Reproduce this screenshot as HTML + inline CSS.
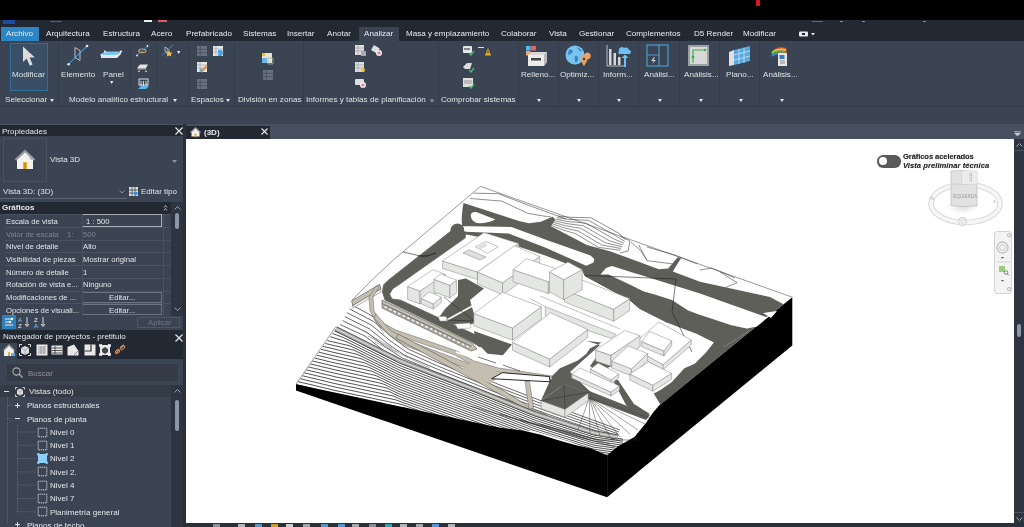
<!DOCTYPE html><html><head><meta charset="utf-8"><style>
*{margin:0;padding:0;box-sizing:border-box}
html,body{width:1024px;height:527px;overflow:hidden;background:#3b4453;font-family:"Liberation Sans",sans-serif}
body>div{position:absolute}
.t{position:absolute;white-space:nowrap;line-height:1;will-change:transform}
svg{position:absolute;overflow:visible}
</style></head><body><div style="left:0px;top:0px;width:1024px;height:20px;background:#000;"></div><div style="left:756px;top:0px;width:4px;height:6px;background:#e0141c;"></div><div style="left:0px;top:20px;width:1024px;height:7px;background:#232932;"></div><div style="left:3px;top:20px;width:12px;height:4px;background:#1e4aa8;"></div><div style="left:50px;top:21px;width:12px;height:1px;background:#5a6270;"></div><div style="left:144px;top:20px;width:8px;height:2px;background:#e8eef4;"></div><div style="left:158px;top:20px;width:9px;height:2px;background:#e05a5a;"></div><div style="left:812px;top:21px;width:11px;height:1px;background:#4a6ab0;"></div><div style="left:840px;top:21px;width:3px;height:1px;background:#8a8f98;"></div><div style="left:862px;top:21px;width:3px;height:1px;background:#8a8f98;"></div><div style="left:923px;top:21px;width:3px;height:1px;background:#8a8f98;"></div><div style="left:0px;top:27px;width:1024px;height:14px;background:#232932;"></div><div style="left:1px;top:27px;width:38px;height:14px;background:#2d86c4;"></div><div style="left:358.5px;top:27px;width:40.5px;height:14px;background:#3b4453;"></div><div class="t" style="left:6px;top:30.2px;font-size:8.1px;color:#e9ecef;">Archivo</div><div class="t" style="left:46.4px;top:30.2px;font-size:8.1px;color:#e9ecef;">Arquitectura</div><div class="t" style="left:103px;top:30.2px;font-size:8.1px;color:#e9ecef;">Estructura</div><div class="t" style="left:151px;top:30.2px;font-size:8.1px;color:#e9ecef;">Acero</div><div class="t" style="left:185.5px;top:30.2px;font-size:8.1px;color:#e9ecef;">Prefabricado</div><div class="t" style="left:243px;top:30.2px;font-size:8.1px;color:#e9ecef;">Sistemas</div><div class="t" style="left:287px;top:30.2px;font-size:8.1px;color:#e9ecef;">Insertar</div><div class="t" style="left:327px;top:30.2px;font-size:8.1px;color:#e9ecef;">Anotar</div><div class="t" style="left:364px;top:30.2px;font-size:8.1px;color:#e9ecef;">Analizar</div><div class="t" style="left:406px;top:30.2px;font-size:8.1px;color:#e9ecef;">Masa y emplazamiento</div><div class="t" style="left:501px;top:30.2px;font-size:8.1px;color:#e9ecef;">Colaborar</div><div class="t" style="left:549px;top:30.2px;font-size:8.1px;color:#e9ecef;">Vista</div><div class="t" style="left:579px;top:30.2px;font-size:8.1px;color:#e9ecef;">Gestionar</div><div class="t" style="left:626px;top:30.2px;font-size:8.1px;color:#e9ecef;">Complementos</div><div class="t" style="left:694px;top:30.2px;font-size:8.1px;color:#e9ecef;">D5 Render</div><div class="t" style="left:743px;top:30.2px;font-size:8.1px;color:#e9ecef;">Modificar</div><svg style="left:799px;top:31px;" width="18" height="6" viewBox="0 0 18 6"><rect x="0" y="0.5" width="9" height="5" rx="1" fill="#e6e9ec"/><rect x="3" y="2" width="3" height="2" fill="#232932"/><path d="M12 2H16L14 4.5Z" fill="#e6e9ec"/></svg><div style="left:0px;top:41px;width:1024px;height:64px;background:#3b4453;"></div><div style="left:0px;top:41px;width:1024px;height:65px;background:#3b4453;"></div><div style="left:0px;top:106px;width:1024px;height:1px;background:#313844;"></div><div style="left:0px;top:107px;width:1024px;height:18px;background:#3b4453;"></div><div style="left:57.5px;top:42px;width:1px;height:63px;background:#343c49;"></div><div style="left:187.5px;top:42px;width:1px;height:63px;background:#343c49;"></div><div style="left:233.5px;top:42px;width:1px;height:63px;background:#343c49;"></div><div style="left:302.5px;top:42px;width:1px;height:63px;background:#343c49;"></div><div style="left:437.5px;top:42px;width:1px;height:63px;background:#343c49;"></div><div style="left:517.5px;top:42px;width:1px;height:63px;background:#343c49;"></div><div style="left:557.5px;top:42px;width:1px;height:63px;background:#343c49;"></div><div style="left:597.5px;top:42px;width:1px;height:63px;background:#343c49;"></div><div style="left:637.5px;top:42px;width:1px;height:63px;background:#343c49;"></div><div style="left:679px;top:42px;width:1px;height:63px;background:#343c49;"></div><div style="left:719px;top:42px;width:1px;height:63px;background:#343c49;"></div><div style="left:759px;top:42px;width:1px;height:63px;background:#343c49;"></div><div style="left:130px;top:43px;width:1px;height:48px;background:#343c49;"></div><div style="left:155.5px;top:43px;width:1px;height:48px;background:#343c49;"></div><div style="left:10px;top:43px;width:38px;height:48px;background:#3a4f66;border:1px solid #2f6f99"></div><svg style="left:22px;top:46px;" width="15" height="21" viewBox="0 0 15 21"><path d="M1 0.5V16L4.6 12.6L7.8 19.8L10.6 18.6L7.6 11.6L12.8 11.4Z" fill="#dcdcdc"/></svg><div class="t" style="left:12.3px;top:70.6px;font-size:8.1px;color:#dfe2e6;">Modificar</div><div class="t" style="left:4.6px;top:95.8px;font-size:8.1px;color:#dfe2e6;">Seleccionar</div><svg style="left:49.8px;top:98.5px;" width="5" height="3" viewBox="0 0 5 3"><path d="M0 0H4L2.0 3Z" fill="#e6e9ec"/></svg><svg style="left:66px;top:44px;" width="24" height="22" viewBox="0 0 24 22"><path d="M2.6 20.2L21 2" stroke="#3b8fd0" stroke-width="1.1"/><path d="M9 3.5L14 6.5V16.5L9 13.5Z" fill="none" stroke="#c8c8c8" stroke-width="0.9"/><circle cx="2.6" cy="20.2" r="1.3" fill="#e8e8e8"/><circle cx="21" cy="2" r="1.3" fill="#e8e8e8"/></svg><div class="t" style="left:60.7px;top:70.6px;font-size:8.1px;color:#dfe2e6;">Elemento</div><svg style="left:100px;top:49px;" width="23" height="12" viewBox="0 0 23 12"><path d="M1 5L5 2.5H21L17 6H1Z" fill="#7cc7f2"/><path d="M1 6H17L21 2.5V5L17 9H1Z" fill="#e6e6e6"/><circle cx="5" cy="2.5" r="1.1" fill="#eee"/><circle cx="21" cy="2.5" r="1.1" fill="#eee"/><circle cx="1.5" cy="6" r="1.1" fill="#eee"/><circle cx="17" cy="6.5" r="1.1" fill="#eee"/></svg><div class="t" style="left:102.6px;top:70.6px;font-size:8.1px;color:#dfe2e6;">Panel</div><svg style="left:110px;top:80.5px;" width="4.4" height="3" viewBox="0 0 4.4 3"><path d="M0 0H3.4L1.7 3Z" fill="#e6e9ec"/></svg><svg style="left:136px;top:45px;" width="13" height="12" viewBox="0 0 13 12"><path d="M1 10.5L11.5 1" stroke="#3b8fd0" stroke-width="1"/><ellipse cx="6.3" cy="5.8" rx="3.6" ry="1.8" fill="none" stroke="#d39a6a" stroke-width="1.2"/><circle cx="1" cy="10.5" r="0.9" fill="#eee"/><circle cx="11.5" cy="1" r="0.9" fill="#eee"/></svg><svg style="left:137px;top:63px;" width="12" height="10" viewBox="0 0 12 10"><path d="M0.5 4.5L3 1.5H11L9 5H0.5Z" fill="#e4e4e4"/><path d="M0.5 5H9V6.5H0.5Z" fill="#aaa"/><path d="M1 9L2 7L3 9ZM8 9L9 7L10 9Z" fill="#ddd"/></svg><svg style="left:137px;top:78px;" width="12" height="12" viewBox="0 0 12 12"><path d="M1 11L4 8H12L9 11Z" fill="#5ab8f0"/><rect x="2" y="1" width="9" height="6" fill="none" stroke="#ddd" stroke-width="1"/><path d="M4 3V8M6.5 3V8M9 3V8" stroke="#ddd"/></svg><svg style="left:161px;top:44px;" width="13" height="13" viewBox="0 0 13 13"><path d="M1 11.5L12 1" stroke="#3b8fd0" stroke-width="1"/><path d="M4 3L7 5V9L4 7Z" fill="none" stroke="#ccc" stroke-width="0.8"/><path d="M8 6L9 8.5L11.5 8.8L9.8 10.3L10.3 12.6L8 11.4L5.8 12.6L6.3 10.3L4.6 8.8L7 8.5Z" fill="#f0c040"/></svg><svg style="left:177px;top:50.5px;" width="4.4" height="3" viewBox="0 0 4.4 3"><path d="M0 0H3.4L1.7 3Z" fill="#e6e9ec"/></svg><div class="t" style="left:68.7px;top:95.8px;font-size:8.1px;color:#dfe2e6;">Modelo analítico estructural</div><svg style="left:173.2px;top:98.5px;" width="5" height="3" viewBox="0 0 5 3"><path d="M0 0H4L2.0 3Z" fill="#e6e9ec"/></svg><svg style="left:197px;top:46px;" width="10" height="10" viewBox="0 0 10 10"><rect x="0" y="0" width="10" height="10" fill="#6a717c"/><path d="M0 3.3H10M0 6.6H10M3.3 0V10" stroke="#3b4453" stroke-width="0.6"/></svg><svg style="left:213px;top:46px;" width="11" height="11" viewBox="0 0 11 11"><rect x="0" y="0" width="10" height="10" fill="#e6e6e6"/><path d="M0 3H10M0 6H10M3 0V10" stroke="#888" stroke-width="0.5"/><rect x="5" y="4" width="4" height="6" fill="#4aa8e8"/><circle cx="9" cy="7" r="1.5" fill="#4aa8e8"/></svg><svg style="left:197px;top:62px;" width="11" height="11" viewBox="0 0 11 11"><rect x="0" y="0" width="10" height="10" fill="#e6e6e6"/><path d="M0 3H10M0 6H10M3 0V10" stroke="#888" stroke-width="0.5"/><path d="M4 10L10 4" stroke="#e8902a" stroke-width="2"/><path d="M3 9L5 7" stroke="#4aa8e8" stroke-width="2"/></svg><svg style="left:197px;top:79px;" width="10" height="10" viewBox="0 0 10 10"><rect x="0" y="0" width="10" height="10" fill="#6a717c"/><path d="M0 3.3H10M0 6.6H10M3.3 0V10" stroke="#3b4453" stroke-width="0.6"/></svg><div class="t" style="left:191px;top:95.8px;font-size:8.1px;color:#dfe2e6;">Espacios</div><svg style="left:226px;top:98.5px;" width="5" height="3" viewBox="0 0 5 3"><path d="M0 0H4L2.0 3Z" fill="#e6e9ec"/></svg><svg style="left:262px;top:53px;" width="12" height="12" viewBox="0 0 12 12"><rect x="0" y="0" width="10" height="10" fill="#e4e4d0"/><rect x="0" y="0" width="3" height="3" fill="#e8c020"/><rect x="0" y="5" width="5" height="5" fill="#6ab4e8"/><path d="M6 5H11V11H6Z" fill="none" stroke="#aaa" stroke-width="0.8"/></svg><svg style="left:263px;top:70px;" width="10" height="10" viewBox="0 0 10 10"><rect x="0" y="0" width="10" height="10" fill="#6a717c"/><path d="M0 3.3H10M0 6.6H10M3.3 0V10" stroke="#3b4453" stroke-width="0.6"/></svg><div class="t" style="left:238px;top:95.8px;font-size:8.1px;color:#dfe2e6;">División en zonas</div><svg style="left:355px;top:45px;" width="11" height="12" viewBox="0 0 11 12"><rect x="0" y="0" width="9" height="10" fill="#dedede"/><path d="M0 3H9M0 6H9M3 0V10" stroke="#888" stroke-width="0.5"/><rect x="6" y="6" width="5" height="5" fill="#aaa"/></svg><svg style="left:371px;top:45px;" width="12" height="12" viewBox="0 0 12 12"><rect x="1" y="1" width="7" height="6" rx="1" fill="#ddd" transform="rotate(30 4 4)"/><circle cx="8" cy="8" r="3" fill="#eee"/><circle cx="8" cy="8" r="1.6" fill="#e87a9a"/></svg><svg style="left:355px;top:62px;" width="11" height="11" viewBox="0 0 11 11"><rect x="0" y="0" width="9" height="10" fill="#dedede"/><path d="M0 3H9M0 6H9M3 0V10" stroke="#888" stroke-width="0.5"/><circle cx="8" cy="8" r="2" fill="#f0c040"/></svg><svg style="left:355px;top:78px;" width="12" height="11" viewBox="0 0 12 11"><rect x="0" y="1" width="9" height="6" rx="1" fill="#dedede"/><circle cx="8" cy="7" r="3" fill="#eee"/><circle cx="8" cy="7" r="1.6" fill="#e87a9a"/></svg><div class="t" style="left:306px;top:95.8px;font-size:8.1px;color:#dfe2e6;">Informes y tablas de planificación</div><div class="t" style="left:430px;top:96.5px;font-size:7px;color:#c8ccd2;">»</div><svg style="left:463px;top:45px;" width="12" height="12" viewBox="0 0 12 12"><rect x="0" y="1" width="9" height="7" rx="1" fill="#e6e6e6"/><rect x="1" y="3" width="6" height="2" fill="#888"/><path d="M6 8L8 10L11 6" stroke="#3cc070" stroke-width="1.4" fill="none"/></svg><svg style="left:478px;top:45px;" width="13" height="12" viewBox="0 0 13 12"><path d="M0 2.5H6" stroke="#ddd" stroke-width="1"/><path d="M7 10.5L10 3L13 10.5Z" fill="#f0b020"/><path d="M10 5.5V8.5" stroke="#333" stroke-width="1"/></svg><svg style="left:463px;top:62px;" width="12" height="11" viewBox="0 0 12 11"><path d="M0 5L4 1H9L7 7H2Z" fill="#ddd"/><path d="M6 8L8 10L11 6" stroke="#3cc070" stroke-width="1.4" fill="none"/></svg><svg style="left:463px;top:78px;" width="12" height="11" viewBox="0 0 12 11"><rect x="0" y="0" width="10" height="9" fill="#e0e0e0"/><path d="M1 3H9M1 5H9" stroke="#777" stroke-width="0.7"/><path d="M6 8L8 10L11 6" stroke="#3cc070" stroke-width="1.4" fill="none"/></svg><div class="t" style="left:440.5px;top:95.8px;font-size:8.1px;color:#dfe2e6;">Comprobar sistemas</div><svg style="left:525px;top:45px;" width="24" height="22" viewBox="0 0 24 22"><rect x="1" y="1" width="4.5" height="4.5" fill="#5ab8f0"/><rect x="6" y="1" width="5" height="4.5" fill="#e86060"/><rect x="1" y="6" width="4.5" height="4.5" fill="#f0a870"/><path d="M3 10L6 7H22V17L19 21H3Z" fill="#d8d8d8"/><path d="M3 10H19V21H3Z" fill="#ececec"/><path d="M19 10L22 7V17L19 21Z" fill="#b8b8b8"/><rect x="6" y="13" width="10" height="2.5" fill="#444"/></svg><div class="t" style="left:520.6px;top:70.6px;font-size:8.1px;color:#dfe2e6;">Relleno...</div><svg style="left:537px;top:99px;" width="5" height="3" viewBox="0 0 5 3"><path d="M0 0H4L2.0 3Z" fill="#e6e9ec"/></svg><svg style="left:565px;top:45px;" width="24" height="22" viewBox="0 0 24 22"><circle cx="10" cy="10" r="9.5" fill="#7cc4f0"/><path d="M4 5C6 4 8 5 8 7C7 9 5 8 4 11C3 9 3 7 4 5ZM10 11C12 10 14 12 13 15C12 17 11 18 10 17C10 15 9 13 10 11ZM12 2C14 3 16 4 17 6C15 7 13 5 12 2Z" fill="#3a88c8"/><path d="M19 11A3.4 3.4 0 1 1 19 11.01ZM15.8 14.5L19 21L22.2 14.5Z" fill="#f0a060"/><path d="M15.6 14C15.6 11.8 17 10.6 19 10.6C21 10.6 22.4 11.8 22.4 14C22.4 16 20 19 19 21C18 19 15.6 16 15.6 14Z" fill="#f0a060"/><circle cx="19" cy="14" r="1.3" fill="#3b4453"/></svg><div class="t" style="left:560px;top:70.6px;font-size:8.1px;color:#dfe2e6;">Optimiz...</div><svg style="left:577px;top:99px;" width="5" height="3" viewBox="0 0 5 3"><path d="M0 0H4L2.0 3Z" fill="#e6e9ec"/></svg><svg style="left:606px;top:44px;" width="24" height="24" viewBox="0 0 24 24"><path d="M1 1V22H20" stroke="#ccc" stroke-width="0.9" fill="none"/><rect x="3" y="5" width="2.5" height="16" fill="#d8d8d8"/><rect x="7.5" y="9" width="2.5" height="12" fill="#d8d8d8"/><rect x="12" y="13" width="2.5" height="8" fill="#d8d8d8"/><path d="M13 7A3 3 0 0 1 18 4A3.5 3.5 0 0 1 23 6A2 2 0 0 1 23 10H13A2 2 0 0 1 13 7Z" fill="#6cc0f4"/><path d="M18 23V14H15.5L19 10.5L22.5 14H20V23Z" fill="#6cc0f4"/></svg><div class="t" style="left:602.5px;top:70.6px;font-size:8.1px;color:#dfe2e6;">Inform...</div><svg style="left:617px;top:99px;" width="5" height="3" viewBox="0 0 5 3"><path d="M0 0H4L2.0 3Z" fill="#e6e9ec"/></svg><svg style="left:646px;top:44px;" width="24" height="24" viewBox="0 0 24 24"><rect x="1" y="1" width="21" height="21" fill="none" stroke="#4a9ad4" stroke-width="1.2"/><path d="M13 1V22M1 11H13" stroke="#4a9ad4" stroke-width="1.2"/><path d="M8 13L5 17H7.5L6 20L10 16H7.5L9 13Z" fill="#c8ccd0"/></svg><div class="t" style="left:643.5px;top:70.6px;font-size:8.1px;color:#dfe2e6;">Análisi...</div><svg style="left:658px;top:99px;" width="5" height="3" viewBox="0 0 5 3"><path d="M0 0H4L2.0 3Z" fill="#e6e9ec"/></svg><svg style="left:687px;top:44px;" width="24" height="24" viewBox="0 0 24 24"><rect x="1" y="1" width="21" height="21" fill="#9aa0a4"/><rect x="3" y="3" width="17" height="17" fill="#d8d8d8"/><path d="M6 19V6H18" stroke="#3cb04a" stroke-width="1.2" fill="none"/><circle cx="6" cy="13" r="1.5" fill="#3cb04a"/><circle cx="18" cy="6" r="1.2" fill="#3cb04a"/></svg><div class="t" style="left:683.5px;top:70.6px;font-size:8.1px;color:#dfe2e6;">Análisis...</div><svg style="left:699px;top:99px;" width="5" height="3" viewBox="0 0 5 3"><path d="M0 0H4L2.0 3Z" fill="#e6e9ec"/></svg><svg style="left:728px;top:45px;" width="24" height="22" viewBox="0 0 24 22"><path d="M1 7L6 5V20L1 21Z" fill="#e0e0e0"/><path d="M6 5L22 1V16L6 20Z" fill="#5aa8e0"/><path d="M6 10L22 6M6 15L22 11M11 4V19M16 3V18" stroke="#cfe6f6" stroke-width="0.8"/></svg><div class="t" style="left:726px;top:70.6px;font-size:8.1px;color:#dfe2e6;">Plano...</div><svg style="left:739px;top:99px;" width="5" height="3" viewBox="0 0 5 3"><path d="M0 0H4L2.0 3Z" fill="#e6e9ec"/></svg><svg style="left:770px;top:44px;" width="22" height="24" viewBox="0 0 22 24"><path d="M2 9C4 3 12 2 16 4L17 9Z" fill="#e83a3a"/><path d="M2 9C5 5 12 5 16 6" stroke="#f0d020" stroke-width="2" fill="none"/><path d="M2 10C5 7 11 7 15 8" stroke="#40c040" stroke-width="2" fill="none"/><path d="M2 12C5 9 10 9 13 10" stroke="#3a8ad8" stroke-width="2" fill="none"/><rect x="8" y="9" width="9" height="13" fill="#e6e6e6"/><rect x="9.5" y="11" width="5" height="4" fill="#3a7ac0"/><path d="M10 17H15M10 19H15" stroke="#777" stroke-width="0.8"/></svg><div class="t" style="left:763px;top:70.6px;font-size:8.1px;color:#dfe2e6;">Análisis...</div><svg style="left:780px;top:99px;" width="5" height="3" viewBox="0 0 5 3"><path d="M0 0H4L2.0 3Z" fill="#e6e9ec"/></svg><div style="left:0px;top:124px;width:183px;height:1px;background:#4a5362;"></div><div style="left:0px;top:125px;width:183px;height:11px;background:#232932;"></div><div class="t" style="left:2.3px;top:127.6px;font-size:8px;color:#e4e7ea;">Propiedades</div><svg style="left:174.5px;top:127px;" width="8" height="8" viewBox="0 0 8 8"><path d="M0.5 0.5L7.5 7.5M7.5 0.5L0.5 7.5" stroke="#e6e8ea" stroke-width="1.2"/></svg><div style="left:0px;top:136px;width:183px;height:193px;background:#3b4453;"></div><div style="left:183px;top:124px;width:3px;height:403px;background:#2a3039;"></div><div style="left:3px;top:138px;width:44px;height:44px;background:#3b4453;border:1px solid #4a5262"></div><svg style="left:14px;top:149px;" width="22" height="22" viewBox="0 0 22 22"><path d="M3 10L11 2L19 10V20H3Z" fill="#f2f2f2"/><path d="M1.5 11L11 2L20.5 11" stroke="#9a9a9a" stroke-width="2.2" fill="none"/><path d="M11 2L20.5 11L17 11Z" fill="#b0b0b0"/><rect x="9" y="13" width="4" height="7" fill="#e8b030"/><rect x="10" y="14" width="2" height="6" fill="#d09020"/></svg><div class="t" style="left:50.2px;top:156.3px;font-size:8px;color:#e4e7ea;">Vista 3D</div><svg style="left:172px;top:159.5px;" width="6" height="3" viewBox="0 0 6 3"><path d="M0 0H5L2.5 3Z" fill="#8a93a0"/></svg><div class="t" style="left:3px;top:187.8px;font-size:8px;color:#dfe2e6;">Vista 3D: (3D)</div><svg style="left:118.5px;top:190px;" width="6" height="4" viewBox="0 0 6 4"><path d="M0.5 0.5L3 3L5.5 0.5" stroke="#8a93a0" fill="none"/></svg><svg style="left:128.7px;top:186.7px;" width="9" height="9" viewBox="0 0 9 9"><rect x="0" y="0" width="9" height="9" fill="#ddd"/><path d="M0 3H9M0 6H9M3 0V9M6 0V9" stroke="#333" stroke-width="0.7"/><rect x="5" y="5" width="3" height="3" fill="#3a8ad8"/></svg><div class="t" style="left:140.8px;top:187.8px;font-size:8px;color:#dfe2e6;">Editar tipo</div><div style="left:0px;top:197.8px;width:127px;height:1.5px;background:#5c6574;"></div><div style="left:0px;top:201.5px;width:171px;height:12px;background:#232932;"></div><div class="t" style="left:2.3px;top:204px;font-size:8px;color:#e8eaec;"><b>Gráficos</b></div><svg style="left:163.8px;top:205px;" width="3" height="6" viewBox="0 0 3 6"><path d="M0 2.5L1.5 0.5L3 2.5M0 5.5L1.5 3.5L3 5.5" stroke="#c8ccd2" stroke-width="0.8" fill="none"/></svg><div style="left:171px;top:201.5px;width:12px;height:115px;background:#2f3540;"></div><svg style="left:174px;top:205.5px;" width="7" height="4" viewBox="0 0 7 4"><path d="M0.5 3.5L3.5 0.5L6.5 3.5" stroke="#9aa2ac" fill="none" stroke-width="1"/></svg><div style="left:174.5px;top:213px;width:4.5px;height:15.5px;background:#8e97a3;border-radius:2px"></div><svg style="left:174px;top:306.5px;" width="7" height="4" viewBox="0 0 7 4"><path d="M0.5 0.5L3.5 3.5L6.5 0.5" stroke="#9aa2ac" fill="none" stroke-width="1"/></svg><div style="left:5px;top:214.3px;width:166px;height:0.8px;background:#4a5261;"></div><div class="t" style="left:6.4px;top:217.9px;font-size:7.7px;color:#e2e5e8;">Escala de vista</div><div style="left:82px;top:214.3px;width:80px;height:12.8px;background:#3b4453;border:1px solid #a8aeb6"></div><div class="t" style="left:85.5px;top:217.9px;font-size:7.7px;color:#e2e5e8;">1 : 500</div><div style="left:5px;top:227.0px;width:166px;height:0.8px;background:#4a5261;"></div><div class="t" style="left:6.4px;top:230.6px;font-size:7.7px;color:#7d8590;">Valor de escala&nbsp;&nbsp;&nbsp;&nbsp;1:</div><div class="t" style="left:83px;top:230.6px;font-size:7.7px;color:#7d8590;">500</div><div style="left:5px;top:239.70000000000002px;width:166px;height:0.8px;background:#4a5261;"></div><div class="t" style="left:6.4px;top:243.3px;font-size:7.7px;color:#e2e5e8;">Nivel de detalle</div><div class="t" style="left:83px;top:243.3px;font-size:7.7px;color:#e2e5e8;">Alto</div><div style="left:5px;top:252.4px;width:166px;height:0.8px;background:#4a5261;"></div><div class="t" style="left:6.4px;top:256.0px;font-size:7.7px;color:#e2e5e8;">Visibilidad de piezas</div><div class="t" style="left:83px;top:256.0px;font-size:7.7px;color:#e2e5e8;">Mostrar original</div><div style="left:5px;top:265.1px;width:166px;height:0.8px;background:#4a5261;"></div><div class="t" style="left:6.4px;top:268.70000000000005px;font-size:7.7px;color:#e2e5e8;">Número de detalle</div><div class="t" style="left:83px;top:268.70000000000005px;font-size:7.7px;color:#e2e5e8;">1</div><div style="left:5px;top:277.8px;width:166px;height:0.8px;background:#4a5261;"></div><div class="t" style="left:6.4px;top:281.40000000000003px;font-size:7.7px;color:#e2e5e8;">Rotación de vista e...</div><div class="t" style="left:83px;top:281.40000000000003px;font-size:7.7px;color:#e2e5e8;">Ninguno</div><div style="left:5px;top:290.5px;width:166px;height:0.8px;background:#4a5261;"></div><div class="t" style="left:6.4px;top:294.1px;font-size:7.7px;color:#e2e5e8;">Modificaciones de ...</div><div style="left:82px;top:291.7px;width:80px;height:11px;background:#3b4453;border:1px solid #6a7382"></div><div class="t" style="left:109px;top:294.1px;font-size:7.7px;color:#e2e5e8;">Editar...</div><div style="left:5px;top:303.2px;width:166px;height:0.8px;background:#4a5261;"></div><div class="t" style="left:6.4px;top:306.8px;font-size:7.7px;color:#e2e5e8;">Opciones de visuali...</div><div style="left:82px;top:304.4px;width:80px;height:11px;background:#3b4453;border:1px solid #6a7382"></div><div class="t" style="left:109px;top:306.8px;font-size:7.7px;color:#e2e5e8;">Editar...</div><div style="left:81.5px;top:214.3px;width:0.8px;height:102px;background:#4a5261;"></div><div style="left:162.5px;top:214.3px;width:0.8px;height:102px;background:#4a5261;"></div><div style="left:0px;top:214px;width:5px;height:102px;background:#3b4453;"></div><div style="left:0px;top:316px;width:183px;height:13px;background:#3b4453;"></div><div style="left:2.4px;top:314.5px;width:13.6px;height:14px;background:#2f7fb8;"></div><svg style="left:4px;top:317px;" width="11" height="9" viewBox="0 0 11 9"><path d="M1 2H8M1 5H6M1 8H9" stroke="#eee" stroke-width="1"/><circle cx="8" cy="2" r="1.3" fill="#eee"/><circle cx="6" cy="5" r="1.3" fill="#eee"/></svg><svg style="left:18px;top:316px;" width="12" height="12" viewBox="0 0 12 12"><text x="0" y="5.5" font-size="6" fill="#8cc8f0" font-family="Liberation Sans">A</text><text x="0" y="11.5" font-size="6" fill="#eee" font-family="Liberation Sans">Z</text><path d="M9 1V10M7 8L9 10.5L11 8" stroke="#eee" fill="none" stroke-width="0.9"/></svg><svg style="left:34px;top:316px;" width="12" height="12" viewBox="0 0 12 12"><text x="0" y="5.5" font-size="6" fill="#eee" font-family="Liberation Sans">Z</text><text x="0" y="11.5" font-size="6" fill="#8cc8f0" font-family="Liberation Sans">A</text><path d="M9 1V10M7 8L9 10.5L11 8" stroke="#eee" fill="none" stroke-width="0.9"/></svg><div style="left:137px;top:316.5px;width:43px;height:11px;background:#3b4453;border:1px solid #4e5766"></div><div class="t" style="left:148px;top:319.3px;font-size:7.7px;color:#6e7682;">Aplicar</div><div style="left:0px;top:329.5px;width:183px;height:13px;background:#232932;"></div><div class="t" style="left:2.8px;top:332.6px;font-size:8px;color:#e4e7ea;">Navegador de proyectos - pretitulo</div><svg style="left:174.5px;top:333.5px;" width="8" height="8" viewBox="0 0 8 8"><path d="M0.5 0.5L7.5 7.5M7.5 0.5L0.5 7.5" stroke="#e6e8ea" stroke-width="1.2"/></svg><div style="left:0px;top:342.5px;width:183px;height:16px;background:#232932;"></div><div style="left:0px;top:342.5px;width:17px;height:16px;background:#3b4453;"></div><svg style="left:3px;top:344px;" width="13" height="13" viewBox="0 0 13 13"><path d="M1 6L6 1L11 6V12H1Z" fill="#f0f0f0"/><path d="M0.5 6.5L6 1L11.5 6.5" stroke="#999" stroke-width="1.4" fill="none"/><rect x="5" y="8" width="2" height="4" fill="#e8b030"/><rect x="8" y="9" width="4" height="3" fill="#5ab0f0"/></svg><svg style="left:19px;top:344px;" width="12" height="12" viewBox="0 0 12 12"><path d="M2 4L6 2L10 4V9L6 11L2 9Z" fill="#ddd"/><path d="M2 4L6 6L10 4M6 6V11" stroke="#888" stroke-width="0.6" fill="none"/><path d="M0.5 3V0.5H3M9 0.5H11.5V3M11.5 9V11.5H9M3 11.5H0.5V9" stroke="#eee" fill="none" stroke-width="0.9"/></svg><svg style="left:36px;top:344px;" width="12" height="12" viewBox="0 0 12 12"><rect x="0.5" y="0.5" width="11" height="11" fill="#e8e8e8"/><path d="M2 3H10M2 5H10M2 7H10M2 9H10M5 2V10M8 2V10" stroke="#666" stroke-width="0.5"/></svg><svg style="left:51px;top:344px;" width="12" height="12" viewBox="0 0 12 12"><rect x="0.5" y="1.5" width="11" height="9" fill="#e8e8e8"/><path d="M1 4H11M1 6.5H11M1 9H11M4 2V10" stroke="#333" stroke-width="0.8"/></svg><svg style="left:67px;top:344px;" width="12" height="12" viewBox="0 0 12 12"><path d="M0.5 3L7 0.5L11.5 7V11.5H0.5Z" fill="#e8e8e8"/><path d="M7 11L11 7" stroke="#777" stroke-width="0.8"/></svg><svg style="left:84px;top:344px;" width="12" height="12" viewBox="0 0 12 12"><rect x="0.5" y="0.5" width="11" height="11" fill="#e8e8e8"/><path d="M7 0.5V7H0.5" stroke="#333" fill="none" stroke-width="1.2"/></svg><svg style="left:99px;top:344px;" width="12" height="12" viewBox="0 0 12 12"><rect x="1" y="1" width="10" height="10" fill="#e8e8e8"/><path d="M0.5 3V0.5H3M9 0.5H11.5V3M11.5 9V11.5H9M3 11.5H0.5V9" stroke="#eee" fill="none" stroke-width="0.9"/><path d="M3 5L6 3L9 5V8L6 10L3 8Z" fill="#444"/></svg><svg style="left:114px;top:344px;" width="12" height="12" viewBox="0 0 12 12"><path d="M2 9L5 6M7 4L10 1" stroke="#d8905a" stroke-width="1.2"/><rect x="1" y="6" width="5" height="3" rx="1.5" transform="rotate(-45 3.5 7.5)" fill="none" stroke="#d8905a" stroke-width="1"/><rect x="6" y="2" width="5" height="3" rx="1.5" transform="rotate(-45 8.5 3.5)" fill="none" stroke="#d8905a" stroke-width="1"/></svg><div style="left:0px;top:358.5px;width:183px;height:169px;background:#3b4453;"></div><div style="left:6.5px;top:363.5px;width:171px;height:17px;background:#343b47;"></div><svg style="left:11.5px;top:367px;" width="11" height="11" viewBox="0 0 11 11"><circle cx="4.5" cy="4.5" r="3.6" stroke="#a8b0ba" stroke-width="1.1" fill="none"/><path d="M7 7L10.5 10.5" stroke="#a8b0ba" stroke-width="1.3"/></svg><div class="t" style="left:28px;top:369.6px;font-size:8px;color:#8a929c;">Buscar</div><div style="left:171px;top:384.5px;width:12px;height:143px;background:#2f3540;"></div><svg style="left:174px;top:389px;" width="7" height="4" viewBox="0 0 7 4"><path d="M0.5 3.5L3.5 0.5L6.5 3.5" stroke="#9aa2ac" fill="none" stroke-width="1"/></svg><div style="left:174.5px;top:399.5px;width:4.5px;height:31px;background:#8e97a3;border-radius:2px"></div><div style="left:0px;top:385.3px;width:171px;height:12px;background:#343b47;"></div><div style="left:4px;top:391px;width:5px;height:1px;background:#dfe2e6;"></div><svg style="left:15px;top:386.5px;" width="10" height="10" viewBox="0 0 10 10"><path d="M2 3L5 1.5L8 3V7L5 8.5L2 7Z" fill="#ddd"/><path d="M2 3L5 4.5L8 3M5 4.5V8.5" stroke="#888" stroke-width="0.5" fill="none"/><path d="M0.5 2.5V0.5H2.5M7.5 0.5H9.5V2.5M9.5 7.5V9.5H7.5M2.5 9.5H0.5V7.5" stroke="#eee" fill="none" stroke-width="0.8"/></svg><div class="t" style="left:29px;top:388.3px;font-size:8px;color:#e4e7ea;">Vistas (todo)</div><svg style="left:0px;top:397px;" width="40" height="128" viewBox="0 0 40 128"><path d="M7.5 0V128M17.5 28V115" stroke="#6a727e" stroke-width="0.8" stroke-dasharray="1 1"/><path d="M7.5 8.3H13" stroke="#6a727e" stroke-width="0.8" stroke-dasharray="1 1"/><path d="M7.5 21.6H13" stroke="#6a727e" stroke-width="0.8" stroke-dasharray="1 1"/><path d="M17.5 35.0H36" stroke="#6a727e" stroke-width="0.8" stroke-dasharray="1 1"/><path d="M17.5 48.3H36" stroke="#6a727e" stroke-width="0.8" stroke-dasharray="1 1"/><path d="M17.5 61.6H36" stroke="#6a727e" stroke-width="0.8" stroke-dasharray="1 1"/><path d="M17.5 74.9H36" stroke="#6a727e" stroke-width="0.8" stroke-dasharray="1 1"/><path d="M17.5 88.2H36" stroke="#6a727e" stroke-width="0.8" stroke-dasharray="1 1"/><path d="M17.5 101.5H36" stroke="#6a727e" stroke-width="0.8" stroke-dasharray="1 1"/><path d="M17.5 114.80000000000001H36" stroke="#6a727e" stroke-width="0.8" stroke-dasharray="1 1"/></svg><div style="left:15px;top:404.8px;width:5px;height:1px;background:#dfe2e6;"></div><div style="left:17px;top:402.8px;width:1px;height:5px;background:#dfe2e6;"></div><div class="t" style="left:26.5px;top:402.4px;font-size:8px;color:#e4e7ea;">Planos estructurales</div><div style="left:15px;top:418px;width:5px;height:1px;background:#dfe2e6;"></div><div class="t" style="left:26.5px;top:415.7px;font-size:8px;color:#e4e7ea;">Planos de planta</div><svg style="left:37px;top:426.5px;" width="11" height="11" viewBox="0 0 11 11"><rect x="1.2" y="1.2" width="8.6" height="8.6" fill="none" stroke="#d8dadc" stroke-width="1" stroke-dasharray="1.2 0.8"/></svg><div class="t" style="left:50.4px;top:428.8px;font-size:8px;color:#e4e7ea;">Nivel 0</div><svg style="left:37px;top:439.8px;" width="11" height="11" viewBox="0 0 11 11"><rect x="1.2" y="1.2" width="8.6" height="8.6" fill="none" stroke="#d8dadc" stroke-width="1" stroke-dasharray="1.2 0.8"/></svg><div class="t" style="left:50.4px;top:442.1px;font-size:8px;color:#e4e7ea;">Nivel 1</div><svg style="left:37px;top:453.1px;" width="11" height="11" viewBox="0 0 11 11"><rect x="1" y="1" width="9" height="9" fill="#8ccff8"/><path d="M0.5 2.5V0.5H2.5M8.5 0.5H10.5V2.5M10.5 8.5V10.5H8.5M2.5 10.5H0.5V8.5" stroke="#ccc" fill="none" stroke-width="0.8"/></svg><div class="t" style="left:50.4px;top:455.40000000000003px;font-size:8px;color:#e4e7ea;">Nivel 2</div><svg style="left:37px;top:466.4px;" width="11" height="11" viewBox="0 0 11 11"><rect x="1.2" y="1.2" width="8.6" height="8.6" fill="none" stroke="#d8dadc" stroke-width="1" stroke-dasharray="1.2 0.8"/></svg><div class="t" style="left:50.4px;top:468.7px;font-size:8px;color:#e4e7ea;">Nivel 2.</div><svg style="left:37px;top:479.7px;" width="11" height="11" viewBox="0 0 11 11"><rect x="1.2" y="1.2" width="8.6" height="8.6" fill="none" stroke="#d8dadc" stroke-width="1" stroke-dasharray="1.2 0.8"/></svg><div class="t" style="left:50.4px;top:482.0px;font-size:8px;color:#e4e7ea;">Nivel 4</div><svg style="left:37px;top:493.0px;" width="11" height="11" viewBox="0 0 11 11"><rect x="1.2" y="1.2" width="8.6" height="8.6" fill="none" stroke="#d8dadc" stroke-width="1" stroke-dasharray="1.2 0.8"/></svg><div class="t" style="left:50.4px;top:495.3px;font-size:8px;color:#e4e7ea;">Nivel 7</div><svg style="left:37px;top:506.3px;" width="11" height="11" viewBox="0 0 11 11"><rect x="1.2" y="1.2" width="8.6" height="8.6" fill="none" stroke="#d8dadc" stroke-width="1" stroke-dasharray="1.2 0.8"/></svg><div class="t" style="left:50.4px;top:508.6px;font-size:8px;color:#e4e7ea;">Planimetría general</div><div style="left:15px;top:524px;width:5px;height:1px;background:#dfe2e6;"></div><div style="left:17px;top:522px;width:1px;height:5px;background:#dfe2e6;"></div><div class="t" style="left:26.5px;top:521.7px;font-size:8px;color:#e4e7ea;">Planos de techo</div><div style="left:186px;top:124px;width:838px;height:15px;background:#475061;"></div><div style="left:186px;top:125.5px;width:84px;height:13.5px;background:#232932;"></div><svg style="left:189.5px;top:126.5px;" width="11" height="10" viewBox="0 0 11 10"><path d="M1.5 5L5.5 1L9.5 5V9.5H1.5Z" fill="#f0f0f0"/><path d="M0.5 5.5L5.5 0.8L10.5 5.5" stroke="#999" stroke-width="1.3" fill="none"/><rect x="4.5" y="6.5" width="2" height="3" fill="#e8b030"/></svg><div class="t" style="left:203.8px;top:128.6px;font-size:8px;color:#e8eaec;"><b>(3D)</b></div><svg style="left:261px;top:128px;" width="7" height="7" viewBox="0 0 7 7"><path d="M0.5 0.5L6.5 6.5M6.5 0.5L0.5 6.5" stroke="#e6e8ea" stroke-width="1.1"/></svg><svg style="left:1014px;top:131px;" width="7" height="6" viewBox="0 0 7 6"><path d="M0 0.5H7M0.5 2L3.5 5L6.5 2Z" stroke="#c8ccd2" fill="#c8ccd2" stroke-width="0.6"/></svg><div style="left:186px;top:139px;width:827.5px;height:384px;background:#ffffff;"></div><div style="left:1013.5px;top:139px;width:10.5px;height:384px;background:#2f3540;"></div><div style="left:1013.5px;top:150px;width:10.5px;height:0.8px;background:#4a5362;"></div><svg style="left:1016px;top:143px;" width="7" height="4" viewBox="0 0 7 4"><path d="M0.5 3.5L3.5 0.5L6.5 3.5" stroke="#9aa2ac" fill="none" stroke-width="1"/></svg><div style="left:1016.5px;top:324px;width:4.5px;height:13px;background:#8e97a3;border-radius:2px"></div><div style="left:1013.5px;top:512px;width:10.5px;height:0.8px;background:#4a5362;"></div><svg style="left:1016px;top:516.5px;" width="7" height="4" viewBox="0 0 7 4"><path d="M0.5 0.5L3.5 3.5L6.5 0.5" stroke="#9aa2ac" fill="none" stroke-width="1"/></svg><div style="left:183px;top:523px;width:841px;height:4px;background:#2a3039;"></div><svg style="left:0;top:0" width="1024" height="527" viewBox="0 0 1024 527"><defs><clipPath id="vp"><rect x="186" y="139" width="827.5" height="384"/></clipPath></defs><g clip-path="url(#vp)"><clipPath id="slp"><polygon points="296,384.3 335.9,328.8 400.3,361 476.5,390.3 535.1,413.8 593.7,432.8 623,437.2 623,449 607,455 564.4,440.1 535,431.3 494,428.4 400,408 330,394.7 296,384.8"/></clipPath><g clip-path="url(#slp)"><path d="M270.0 302.9L273.0 304.2L276.0 305.5L279.0 306.8L282.0 308.1L285.0 309.4L288.0 310.7L291.0 312.0L294.0 313.3L297.0 314.6L300.0 315.9L303.0 317.2L306.0 318.5L309.0 319.8L312.0 321.1L315.0 322.4L318.0 323.8L321.0 325.1L324.0 326.4L327.0 327.7L330.0 329.0L333.0 330.3L336.0 331.6L339.0 332.9L342.0 334.3L345.0 335.8L348.0 337.3L351.0 338.8L354.0 340.3L357.0 341.8L360.0 343.3L363.0 344.8L366.0 346.3L369.0 347.8L372.0 349.3L375.0 350.8L378.0 352.3L381.0 353.8L384.0 355.3L387.0 356.8L390.0 358.3L393.0 359.8L396.0 361.2L399.0 362.7L402.0 364.0L405.0 365.2L408.0 366.3L411.0 367.5L414.0 368.6L417.0 369.8L420.0 370.9L423.0 372.1L426.0 373.2L429.0 374.4L432.0 375.5L435.0 376.7L438.0 377.8L441.0 379.0L444.0 380.1L447.0 381.3L450.0 382.4L453.0 383.6L456.0 384.7L459.0 385.9L462.0 387.0L465.0 388.2L468.0 389.3L471.0 390.4L474.0 391.6L477.0 392.8L480.0 394.0L483.0 395.2L486.0 396.3L489.0 397.5L492.0 398.7L495.0 399.9L498.0 401.1L501.0 402.3L504.0 403.5L507.0 404.7L510.0 405.9L513.0 407.1L516.0 408.3L519.0 409.5L522.0 410.7L525.0 411.9L528.0 413.1L531.0 414.3L534.0 415.5L537.0 416.6L540.0 417.5L543.0 418.5L546.0 419.5L549.0 420.4L552.0 421.4L555.0 422.4L558.0 423.3L561.0 424.3L564.0 425.3L567.0 426.2L570.0 427.2L573.0 428.2L576.0 429.1L579.0 430.1L582.0 431.1L585.0 432.0L588.0 433.0L591.0 434.0L594.0 434.9L597.0 435.3L600.0 435.8L603.0 436.2L606.0 436.7L609.0 437.1L612.0 437.6L615.0 438.0L618.0 438.5L621.0 438.9L624.0 439.4L627.0 439.8L630.0 440.3L633.0 440.7L636.0 441.2L639.0 441.6M270.0 310.4L273.0 311.5L276.0 312.6L279.0 313.7L282.0 314.8L285.0 315.9L288.0 317.0L291.0 318.1L294.0 319.2L297.0 320.4L300.0 321.5L303.0 322.6L306.0 323.7L309.0 324.8L312.0 325.9L315.0 327.0L318.0 328.1L321.0 329.2L324.0 330.3L327.0 331.5L330.0 332.6L333.0 333.7L336.0 334.8L339.0 335.9L342.0 337.0L345.0 338.3L348.0 339.8L351.0 341.3L354.0 342.8L357.0 344.3L360.0 345.8L363.0 347.3L366.0 348.7L369.0 350.2L372.0 351.7L375.0 353.2L378.0 354.7L381.0 356.2L384.0 357.7L387.0 359.2L390.0 360.7L393.0 362.2L396.0 363.6L399.0 365.1L402.0 366.4L405.0 367.6L408.0 368.7L411.0 369.9L414.0 371.0L417.0 372.1L420.0 373.3L423.0 374.4L426.0 375.6L429.0 376.7L432.0 377.9L435.0 379.0L438.0 380.1L441.0 381.3L444.0 382.4L447.0 383.6L450.0 384.7L453.0 385.9L456.0 387.0L459.0 388.1L462.0 389.3L465.0 390.4L468.0 391.6L471.0 392.7L474.0 393.9L477.0 395.0L480.0 396.2L483.0 397.4L486.0 398.6L489.0 399.8L492.0 401.0L495.0 402.2L498.0 403.4L501.0 404.6L504.0 405.7L507.0 406.9L510.0 408.1L513.0 409.3L516.0 410.5L519.0 411.7L522.0 412.9L525.0 414.1L528.0 415.3L531.0 416.5L534.0 417.7L537.0 418.7L540.0 419.7L543.0 420.6L546.0 421.6L549.0 422.6L552.0 423.5L555.0 424.5L558.0 425.5L561.0 426.4L564.0 427.4L567.0 428.3L570.0 429.3L573.0 430.3L576.0 431.2L579.0 432.2L582.0 433.1L585.0 434.1L588.0 435.1L591.0 436.0L594.0 436.9L597.0 437.4L600.0 437.8L603.0 438.3L606.0 438.7L609.0 439.1L612.0 439.6L615.0 440.0L618.0 440.5L621.0 440.9L624.0 441.4L627.0 441.8L630.0 442.3L633.0 442.7L636.0 443.2L639.0 443.6M270.0 318.3L273.0 319.2L276.0 320.2L279.0 321.1L282.0 322.0L285.0 322.9L288.0 323.8L291.0 324.7L294.0 325.6L297.0 326.6L300.0 327.5L303.0 328.4L306.0 329.3L309.0 330.2L312.0 331.1L315.0 332.1L318.0 333.0L321.0 333.9L324.0 334.8L327.0 335.7L330.0 336.6L333.0 337.5L336.0 338.5L339.0 339.4L342.0 340.3L345.0 341.2L348.0 342.3L351.0 343.8L354.0 345.3L357.0 346.7L360.0 348.2L363.0 349.7L366.0 351.2L369.0 352.7L372.0 354.2L375.0 355.6L378.0 357.1L381.0 358.6L384.0 360.1L387.0 361.6L390.0 363.1L393.0 364.6L396.0 366.0L399.0 367.5L402.0 368.8L405.0 369.9L408.0 371.1L411.0 372.2L414.0 373.4L417.0 374.5L420.0 375.6L423.0 376.8L426.0 377.9L429.0 379.0L432.0 380.2L435.0 381.3L438.0 382.5L441.0 383.6L444.0 384.7L447.0 385.9L450.0 387.0L453.0 388.2L456.0 389.3L459.0 390.4L462.0 391.6L465.0 392.7L468.0 393.8L471.0 395.0L474.0 396.1L477.0 397.3L480.0 398.5L483.0 399.6L486.0 400.8L489.0 402.0L492.0 403.2L495.0 404.4L498.0 405.6L501.0 406.8L504.0 408.0L507.0 409.1L510.0 410.3L513.0 411.5L516.0 412.7L519.0 413.9L522.0 415.1L525.0 416.3L528.0 417.4L531.0 418.6L534.0 419.8L537.0 420.9L540.0 421.8L543.0 422.8L546.0 423.7L549.0 424.7L552.0 425.7L555.0 426.6L558.0 427.6L561.0 428.5L564.0 429.5L567.0 430.4L570.0 431.4L573.0 432.3L576.0 433.3L579.0 434.3L582.0 435.2L585.0 436.2L588.0 437.1L591.0 438.1L594.0 439.0L597.0 439.4L600.0 439.9L603.0 440.3L606.0 440.7L609.0 441.2L612.0 441.6L615.0 442.0L618.0 442.5L621.0 442.9L624.0 443.4L627.0 443.8L630.0 444.3L633.0 444.7L636.0 445.2L639.0 445.6M270.0 326.8L273.0 327.5L276.0 328.2L279.0 328.9L282.0 329.6L285.0 330.4L288.0 331.1L291.0 331.8L294.0 332.5L297.0 333.2L300.0 334.0L303.0 334.7L306.0 335.4L309.0 336.1L312.0 336.8L315.0 337.6L318.0 338.3L321.0 339.0L324.0 339.7L327.0 340.4L330.0 341.2L333.0 341.9L336.0 342.6L339.0 343.3L342.0 344.0L345.0 344.7L348.0 345.4L351.0 346.2L354.0 347.7L357.0 349.2L360.0 350.7L363.0 352.2L366.0 353.6L369.0 355.1L372.0 356.6L375.0 358.1L378.0 359.6L381.0 361.0L384.0 362.5L387.0 364.0L390.0 365.5L393.0 367.0L396.0 368.4L399.0 369.9L402.0 371.2L405.0 372.3L408.0 373.5L411.0 374.6L414.0 375.7L417.0 376.9L420.0 378.0L423.0 379.1L426.0 380.3L429.0 381.4L432.0 382.5L435.0 383.7L438.0 384.8L441.0 385.9L444.0 387.1L447.0 388.2L450.0 389.3L453.0 390.4L456.0 391.6L459.0 392.7L462.0 393.8L465.0 395.0L468.0 396.1L471.0 397.2L474.0 398.4L477.0 399.5L480.0 400.7L483.0 401.9L486.0 403.1L489.0 404.2L492.0 405.4L495.0 406.6L498.0 407.8L501.0 409.0L504.0 410.2L507.0 411.3L510.0 412.5L513.0 413.7L516.0 414.9L519.0 416.1L522.0 417.3L525.0 418.4L528.0 419.6L531.0 420.8L534.0 422.0L537.0 423.0L540.0 424.0L543.0 424.9L546.0 425.9L549.0 426.8L552.0 427.8L555.0 428.7L558.0 429.7L561.0 430.6L564.0 431.6L567.0 432.5L570.0 433.5L573.0 434.4L576.0 435.4L579.0 436.3L582.0 437.3L585.0 438.2L588.0 439.2L591.0 440.1L594.0 441.0L597.0 441.5L600.0 441.9L603.0 442.3L606.0 442.8L609.0 443.2L612.0 443.6L615.0 444.1L618.0 444.5L621.0 444.9L624.0 445.4L627.0 445.8L630.0 446.3L633.0 446.7L636.0 447.2L639.0 447.6M270.0 330.2L273.0 330.9L276.0 331.6L279.0 332.4L282.0 333.1L285.0 333.8L288.0 334.5L291.0 335.2L294.0 336.0L297.0 336.7L300.0 337.4L303.0 338.1L306.0 338.8L309.0 339.6L312.0 340.3L315.0 341.0L318.0 341.7L321.0 342.4L324.0 343.2L327.0 343.9L330.0 344.6L333.0 345.3L336.0 346.0L339.0 346.7L342.0 347.4L345.0 348.1L348.0 348.8L351.0 349.5L354.0 350.2L357.0 351.7L360.0 353.1L363.0 354.6L366.0 356.1L369.0 357.6L372.0 359.0L375.0 360.5L378.0 362.0L381.0 363.5L384.0 364.9L387.0 366.4L390.0 367.9L393.0 369.4L396.0 370.8L399.0 372.3L402.0 373.6L405.0 374.7L408.0 375.8L411.0 377.0L414.0 378.1L417.0 379.2L420.0 380.3L423.0 381.5L426.0 382.6L429.0 383.7L432.0 384.9L435.0 386.0L438.0 387.1L441.0 388.2L444.0 389.4L447.0 390.5L450.0 391.6L453.0 392.7L456.0 393.9L459.0 395.0L462.0 396.1L465.0 397.3L468.0 398.4L471.0 399.5L474.0 400.6L477.0 401.8L480.0 402.9L483.0 404.1L486.0 405.3L489.0 406.5L492.0 407.7L495.0 408.8L498.0 410.0L501.0 411.2L504.0 412.4L507.0 413.5L510.0 414.7L513.0 415.9L516.0 417.1L519.0 418.2L522.0 419.4L525.0 420.6L528.0 421.8L531.0 423.0L534.0 424.1L537.0 425.2L540.0 426.1L543.0 427.1L546.0 428.0L549.0 429.0L552.0 429.9L555.0 430.8L558.0 431.8L561.0 432.7L564.0 433.7L567.0 434.6L570.0 435.6L573.0 436.5L576.0 437.5L579.0 438.4L582.0 439.4L585.0 440.3L588.0 441.3L591.0 442.2L594.0 443.1L597.0 443.5L600.0 443.9L603.0 444.4L606.0 444.8L609.0 445.2L612.0 445.6L615.0 446.1L618.0 446.5L621.0 446.9L624.0 447.4L627.0 447.8L630.0 448.3L633.0 448.7L636.0 449.2L639.0 449.6M270.0 333.6L273.0 334.3L276.0 335.1L279.0 335.8L282.0 336.5L285.0 337.2L288.0 337.9L291.0 338.7L294.0 339.4L297.0 340.1L300.0 340.8L303.0 341.5L306.0 342.3L309.0 343.0L312.0 343.7L315.0 344.4L318.0 345.1L321.0 345.9L324.0 346.6L327.0 347.3L330.0 348.0L333.0 348.7L336.0 349.5L339.0 350.2L342.0 350.8L345.0 351.5L348.0 352.2L351.0 352.9L354.0 353.6L357.0 354.3L360.0 355.6L363.0 357.1L366.0 358.5L369.0 360.0L372.0 361.5L375.0 362.9L378.0 364.4L381.0 365.9L384.0 367.3L387.0 368.8L390.0 370.3L393.0 371.8L396.0 373.2L399.0 374.7L402.0 376.0L405.0 377.1L408.0 378.2L411.0 379.3L414.0 380.5L417.0 381.6L420.0 382.7L423.0 383.8L426.0 384.9L429.0 386.1L432.0 387.2L435.0 388.3L438.0 389.4L441.0 390.6L444.0 391.7L447.0 392.8L450.0 393.9L453.0 395.0L456.0 396.2L459.0 397.3L462.0 398.4L465.0 399.5L468.0 400.7L471.0 401.8L474.0 402.9L477.0 404.0L480.0 405.2L483.0 406.4L486.0 407.5L489.0 408.7L492.0 409.9L495.0 411.1L498.0 412.2L501.0 413.4L504.0 414.6L507.0 415.7L510.0 416.9L513.0 418.1L516.0 419.3L519.0 420.4L522.0 421.6L525.0 422.8L528.0 423.9L531.0 425.1L534.0 426.3L537.0 427.3L540.0 428.3L543.0 429.2L546.0 430.1L549.0 431.1L552.0 432.0L555.0 433.0L558.0 433.9L561.0 434.8L564.0 435.8L567.0 436.7L570.0 437.7L573.0 438.6L576.0 439.6L579.0 440.5L582.0 441.4L585.0 442.4L588.0 443.3L591.0 444.3L594.0 445.1L597.0 445.6L600.0 446.0L603.0 446.4L606.0 446.8L609.0 447.2L612.0 447.7L615.0 448.1L618.0 448.5L621.0 448.9L624.0 449.4L627.0 449.8L630.0 450.3L633.0 450.7L636.0 451.2L639.0 451.6M270.0 337.1L273.0 337.8L276.0 338.5L279.0 339.2L282.0 339.9L285.0 340.7L288.0 341.4L291.0 342.1L294.0 342.8L297.0 343.5L300.0 344.3L303.0 345.0L306.0 345.7L309.0 346.4L312.0 347.1L315.0 347.9L318.0 348.6L321.0 349.3L324.0 350.0L327.0 350.7L330.0 351.5L333.0 352.2L336.0 352.9L339.0 353.6L342.0 354.3L345.0 355.0L348.0 355.6L351.0 356.3L354.0 357.0L357.0 357.7L360.0 358.4L363.0 359.5L366.0 361.0L369.0 362.4L372.0 363.9L375.0 365.4L378.0 366.8L381.0 368.3L384.0 369.8L387.0 371.2L390.0 372.7L393.0 374.2L396.0 375.6L399.0 377.1L402.0 378.3L405.0 379.5L408.0 380.6L411.0 381.7L414.0 382.8L417.0 383.9L420.0 385.1L423.0 386.2L426.0 387.3L429.0 388.4L432.0 389.5L435.0 390.6L438.0 391.8L441.0 392.9L444.0 394.0L447.0 395.1L450.0 396.2L453.0 397.3L456.0 398.5L459.0 399.6L462.0 400.7L465.0 401.8L468.0 402.9L471.0 404.0L474.0 405.2L477.0 406.3L480.0 407.4L483.0 408.6L486.0 409.8L489.0 410.9L492.0 412.1L495.0 413.3L498.0 414.4L501.0 415.6L504.0 416.8L507.0 417.9L510.0 419.1L513.0 420.3L516.0 421.4L519.0 422.6L522.0 423.8L525.0 424.9L528.0 426.1L531.0 427.3L534.0 428.4L537.0 429.5L540.0 430.4L543.0 431.3L546.0 432.3L549.0 433.2L552.0 434.1L555.0 435.1L558.0 436.0L561.0 437.0L564.0 437.9L567.0 438.8L570.0 439.8L573.0 440.7L576.0 441.6L579.0 442.6L582.0 443.5L585.0 444.4L588.0 445.4L591.0 446.3L594.0 447.2L597.0 447.6L600.0 448.0L603.0 448.4L606.0 448.9L609.0 449.3L612.0 449.7L615.0 450.1L618.0 450.5L621.0 450.9L624.0 451.4L627.0 451.8L630.0 452.3L633.0 452.7L636.0 453.2L639.0 453.6M270.0 340.5L273.0 341.2L276.0 341.9L279.0 342.7L282.0 343.4L285.0 344.1L288.0 344.8L291.0 345.5L294.0 346.3L297.0 347.0L300.0 347.7L303.0 348.4L306.0 349.1L309.0 349.9L312.0 350.6L315.0 351.3L318.0 352.0L321.0 352.7L324.0 353.5L327.0 354.2L330.0 354.9L333.0 355.6L336.0 356.3L339.0 357.0L342.0 357.7L345.0 358.4L348.0 359.1L351.0 359.7L354.0 360.4L357.0 361.1L360.0 361.8L363.0 362.4L366.0 363.4L369.0 364.9L372.0 366.3L375.0 367.8L378.0 369.3L381.0 370.7L384.0 372.2L387.0 373.6L390.0 375.1L393.0 376.6L396.0 378.0L399.0 379.5L402.0 380.7L405.0 381.8L408.0 383.0L411.0 384.1L414.0 385.2L417.0 386.3L420.0 387.4L423.0 388.5L426.0 389.6L429.0 390.7L432.0 391.9L435.0 393.0L438.0 394.1L441.0 395.2L444.0 396.3L447.0 397.4L450.0 398.5L453.0 399.6L456.0 400.7L459.0 401.9L462.0 403.0L465.0 404.1L468.0 405.2L471.0 406.3L474.0 407.4L477.0 408.5L480.0 409.7L483.0 410.9L486.0 412.0L489.0 413.2L492.0 414.3L495.0 415.5L498.0 416.7L501.0 417.8L504.0 419.0L507.0 420.1L510.0 421.3L513.0 422.5L516.0 423.6L519.0 424.8L522.0 426.0L525.0 427.1L528.0 428.3L531.0 429.4L534.0 430.6L537.0 431.6L540.0 432.5L543.0 433.5L546.0 434.4L549.0 435.3L552.0 436.3L555.0 437.2L558.0 438.1L561.0 439.1L564.0 440.0L567.0 440.9L570.0 441.9L573.0 442.8L576.0 443.7L579.0 444.6L582.0 445.6L585.0 446.5L588.0 447.4L591.0 448.4L594.0 449.2L597.0 449.7L600.0 450.1L603.0 450.5L606.0 450.9L609.0 451.3L612.0 451.7L615.0 452.1L618.0 452.5L621.0 452.9L624.0 453.4L627.0 453.8L630.0 454.3L633.0 454.7L636.0 455.2L639.0 455.6M270.0 343.9L273.0 344.7L276.0 345.4L279.0 346.1L282.0 346.8L285.0 347.5L288.0 348.3L291.0 349.0L294.0 349.7L297.0 350.4L300.0 351.1L303.0 351.9L306.0 352.6L309.0 353.3L312.0 354.0L315.0 354.7L318.0 355.5L321.0 356.2L324.0 356.9L327.0 357.6L330.0 358.3L333.0 359.1L336.0 359.8L339.0 360.4L342.0 361.1L345.0 361.8L348.0 362.5L351.0 363.1L354.0 363.8L357.0 364.5L360.0 365.2L363.0 365.8L366.0 366.5L369.0 367.3L372.0 368.8L375.0 370.2L378.0 371.7L381.0 373.1L384.0 374.6L387.0 376.1L390.0 377.5L393.0 379.0L396.0 380.4L399.0 381.9L402.0 383.1L405.0 384.2L408.0 385.3L411.0 386.4L414.0 387.5L417.0 388.7L420.0 389.8L423.0 390.9L426.0 392.0L429.0 393.1L432.0 394.2L435.0 395.3L438.0 396.4L441.0 397.5L444.0 398.6L447.0 399.7L450.0 400.8L453.0 401.9L456.0 403.0L459.0 404.1L462.0 405.2L465.0 406.4L468.0 407.5L471.0 408.6L474.0 409.7L477.0 410.8L480.0 411.9L483.0 413.1L486.0 414.3L489.0 415.4L492.0 416.6L495.0 417.7L498.0 418.9L501.0 420.0L504.0 421.2L507.0 422.4L510.0 423.5L513.0 424.7L516.0 425.8L519.0 427.0L522.0 428.1L525.0 429.3L528.0 430.4L531.0 431.6L534.0 432.8L537.0 433.8L540.0 434.7L543.0 435.6L546.0 436.5L549.0 437.5L552.0 438.4L555.0 439.3L558.0 440.2L561.0 441.2L564.0 442.1L567.0 443.0L570.0 443.9L573.0 444.9L576.0 445.8L579.0 446.7L582.0 447.6L585.0 448.6L588.0 449.5L591.0 450.4L594.0 451.3L597.0 451.7L600.0 452.1L603.0 452.5L606.0 452.9L609.0 453.3L612.0 453.7L615.0 454.1L618.0 454.5L621.0 454.9L624.0 455.4L627.0 455.8L630.0 456.3L633.0 456.7L636.0 457.2L639.0 457.6M270.0 347.4L273.0 348.1L276.0 348.8L279.0 349.5L282.0 350.2L285.0 351.0L288.0 351.7L291.0 352.4L294.0 353.1L297.0 353.9L300.0 354.6L303.0 355.3L306.0 356.0L309.0 356.7L312.0 357.5L315.0 358.2L318.0 358.9L321.0 359.6L324.0 360.3L327.0 361.1L330.0 361.8L333.0 362.5L336.0 363.2L339.0 363.9L342.0 364.5L345.0 365.2L348.0 365.9L351.0 366.5L354.0 367.2L357.0 367.9L360.0 368.6L363.0 369.2L366.0 369.9L369.0 370.6L372.0 371.2L375.0 372.7L378.0 374.1L381.0 375.6L384.0 377.0L387.0 378.5L390.0 379.9L393.0 381.4L396.0 382.8L399.0 384.3L402.0 385.5L405.0 386.6L408.0 387.7L411.0 388.8L414.0 389.9L417.0 391.0L420.0 392.1L423.0 393.2L426.0 394.3L429.0 395.4L432.0 396.5L435.0 397.6L438.0 398.7L441.0 399.8L444.0 400.9L447.0 402.0L450.0 403.1L453.0 404.2L456.0 405.3L459.0 406.4L462.0 407.5L465.0 408.6L468.0 409.7L471.0 410.8L474.0 411.9L477.0 413.0L480.0 414.2L483.0 415.3L486.0 416.5L489.0 417.6L492.0 418.8L495.0 419.9L498.0 421.1L501.0 422.3L504.0 423.4L507.0 424.6L510.0 425.7L513.0 426.9L516.0 428.0L519.0 429.2L522.0 430.3L525.0 431.5L528.0 432.6L531.0 433.8L534.0 434.9L537.0 435.9L540.0 436.8L543.0 437.8L546.0 438.7L549.0 439.6L552.0 440.5L555.0 441.4L558.0 442.4L561.0 443.3L564.0 444.2L567.0 445.1L570.0 446.0L573.0 447.0L576.0 447.9L579.0 448.8L582.0 449.7L585.0 450.6L588.0 451.6L591.0 452.5L594.0 453.4L597.0 453.7L600.0 454.1L603.0 454.5L606.0 454.9L609.0 455.3L612.0 455.7L615.0 456.1L618.0 456.5L621.0 456.9L624.0 457.4L627.0 457.8L630.0 458.3L633.0 458.7L636.0 459.2L639.0 459.6M270.0 350.8L273.0 351.5L276.0 352.2L279.0 353.0L282.0 353.7L285.0 354.4L288.0 355.1L291.0 355.8L294.0 356.6L297.0 357.3L300.0 358.0L303.0 358.7L306.0 359.4L309.0 360.2L312.0 360.9L315.0 361.6L318.0 362.3L321.0 363.0L324.0 363.8L327.0 364.5L330.0 365.2L333.0 365.9L336.0 366.6L339.0 367.3L342.0 368.0L345.0 368.6L348.0 369.3L351.0 370.0L354.0 370.6L357.0 371.3L360.0 371.9L363.0 372.6L366.0 373.3L369.0 373.9L372.0 374.6L375.0 375.3L378.0 376.5L381.0 378.0L384.0 379.4L387.0 380.9L390.0 382.3L393.0 383.8L396.0 385.2L399.0 386.6L402.0 387.9L405.0 389.0L408.0 390.1L411.0 391.2L414.0 392.3L417.0 393.4L420.0 394.5L423.0 395.6L426.0 396.7L429.0 397.8L432.0 398.8L435.0 399.9L438.0 401.0L441.0 402.1L444.0 403.2L447.0 404.3L450.0 405.4L453.0 406.5L456.0 407.6L459.0 408.7L462.0 409.8L465.0 410.9L468.0 412.0L471.0 413.1L474.0 414.2L477.0 415.3L480.0 416.4L483.0 417.6L486.0 418.7L489.0 419.9L492.0 421.0L495.0 422.2L498.0 423.3L501.0 424.5L504.0 425.6L507.0 426.8L510.0 427.9L513.0 429.0L516.0 430.2L519.0 431.3L522.0 432.5L525.0 433.6L528.0 434.8L531.0 435.9L534.0 437.1L537.0 438.1L540.0 439.0L543.0 439.9L546.0 440.8L549.0 441.7L552.0 442.6L555.0 443.6L558.0 444.5L561.0 445.4L564.0 446.3L567.0 447.2L570.0 448.1L573.0 449.0L576.0 450.0L579.0 450.9L582.0 451.8L585.0 452.7L588.0 453.6L591.0 454.5L594.0 455.4L597.0 455.8L600.0 456.2L603.0 456.6L606.0 457.0L609.0 457.4L612.0 457.8L615.0 458.2L618.0 458.5L621.0 458.9L624.0 459.4L627.0 459.8L630.0 460.3L633.0 460.7L636.0 461.2L639.0 461.6M270.0 354.2L273.0 355.0L276.0 355.7L279.0 356.4L282.0 357.1L285.0 357.8L288.0 358.6L291.0 359.3L294.0 360.0L297.0 360.7L300.0 361.4L303.0 362.2L306.0 362.9L309.0 363.6L312.0 364.3L315.0 365.0L318.0 365.8L321.0 366.5L324.0 367.2L327.0 367.9L330.0 368.6L333.0 369.4L336.0 370.1L339.0 370.7L342.0 371.4L345.0 372.1L348.0 372.7L351.0 373.4L354.0 374.0L357.0 374.7L360.0 375.3L363.0 376.0L366.0 376.7L369.0 377.3L372.0 378.0L375.0 378.6L378.0 379.3L381.0 380.4L384.0 381.8L387.0 383.3L390.0 384.7L393.0 386.2L396.0 387.6L399.0 389.0L402.0 390.3L405.0 391.4L408.0 392.5L411.0 393.5L414.0 394.6L417.0 395.7L420.0 396.8L423.0 397.9L426.0 399.0L429.0 400.1L432.0 401.2L435.0 402.3L438.0 403.4L441.0 404.5L444.0 405.5L447.0 406.6L450.0 407.7L453.0 408.8L456.0 409.9L459.0 411.0L462.0 412.1L465.0 413.2L468.0 414.3L471.0 415.4L474.0 416.5L477.0 417.6L480.0 418.7L483.0 419.8L486.0 421.0L489.0 422.1L492.0 423.3L495.0 424.4L498.0 425.5L501.0 426.7L504.0 427.8L507.0 429.0L510.0 430.1L513.0 431.2L516.0 432.4L519.0 433.5L522.0 434.7L525.0 435.8L528.0 436.9L531.0 438.1L534.0 439.2L537.0 440.2L540.0 441.1L543.0 442.0L546.0 442.9L549.0 443.9L552.0 444.8L555.0 445.7L558.0 446.6L561.0 447.5L564.0 448.4L567.0 449.3L570.0 450.2L573.0 451.1L576.0 452.0L579.0 453.0L582.0 453.9L585.0 454.8L588.0 455.7L591.0 456.6L594.0 457.5L597.0 457.8L600.0 458.2L603.0 458.6L606.0 459.0L609.0 459.4L612.0 459.8L615.0 460.2L618.0 460.6L621.0 460.9L624.0 461.4L627.0 461.8L630.0 462.3L633.0 462.7L636.0 463.2L639.0 463.6M270.0 357.7L273.0 358.4L276.0 359.1L279.0 359.8L282.0 360.6L285.0 361.3L288.0 362.0L291.0 362.7L294.0 363.4L297.0 364.2L300.0 364.9L303.0 365.6L306.0 366.3L309.0 367.0L312.0 367.8L315.0 368.5L318.0 369.2L321.0 369.9L324.0 370.6L327.0 371.4L330.0 372.1L333.0 372.8L336.0 373.5L339.0 374.2L342.0 374.8L345.0 375.5L348.0 376.1L351.0 376.8L354.0 377.4L357.0 378.1L360.0 378.7L363.0 379.4L366.0 380.0L369.0 380.7L372.0 381.3L375.0 382.0L378.0 382.6L381.0 383.3L384.0 384.3L387.0 385.7L390.0 387.1L393.0 388.6L396.0 390.0L399.0 391.4L402.0 392.7L405.0 393.7L408.0 394.8L411.0 395.9L414.0 397.0L417.0 398.1L420.0 399.2L423.0 400.3L426.0 401.3L429.0 402.4L432.0 403.5L435.0 404.6L438.0 405.7L441.0 406.8L444.0 407.9L447.0 408.9L450.0 410.0L453.0 411.1L456.0 412.2L459.0 413.3L462.0 414.4L465.0 415.5L468.0 416.5L471.0 417.6L474.0 418.7L477.0 419.8L480.0 420.9L483.0 422.1L486.0 423.2L489.0 424.3L492.0 425.5L495.0 426.6L498.0 427.8L501.0 428.9L504.0 430.0L507.0 431.2L510.0 432.3L513.0 433.4L516.0 434.6L519.0 435.7L522.0 436.8L525.0 438.0L528.0 439.1L531.0 440.2L534.0 441.4L537.0 442.4L540.0 443.3L543.0 444.2L546.0 445.1L549.0 446.0L552.0 446.9L555.0 447.8L558.0 448.7L561.0 449.6L564.0 450.5L567.0 451.4L570.0 452.3L573.0 453.2L576.0 454.1L579.0 455.0L582.0 455.9L585.0 456.8L588.0 457.7L591.0 458.6L594.0 459.5L597.0 459.9L600.0 460.3L603.0 460.6L606.0 461.0L609.0 461.4L612.0 461.8L615.0 462.2L618.0 462.6L621.0 462.9L624.0 463.4L627.0 463.8L630.0 464.3L633.0 464.7L636.0 465.2L639.0 465.6M270.0 361.1L273.0 361.8L276.0 362.6L279.0 363.3L282.0 364.0L285.0 364.7L288.0 365.4L291.0 366.2L294.0 366.9L297.0 367.6L300.0 368.3L303.0 369.0L306.0 369.8L309.0 370.5L312.0 371.2L315.0 371.9L318.0 372.6L321.0 373.4L324.0 374.1L327.0 374.8L330.0 375.5L333.0 376.2L336.0 377.0L339.0 377.6L342.0 378.2L345.0 378.9L348.0 379.5L351.0 380.2L354.0 380.8L357.0 381.5L360.0 382.1L363.0 382.8L366.0 383.4L369.0 384.1L372.0 384.7L375.0 385.4L378.0 386.0L381.0 386.7L384.0 387.3L387.0 388.1L390.0 389.5L393.0 391.0L396.0 392.4L399.0 393.8L402.0 395.0L405.0 396.1L408.0 397.2L411.0 398.3L414.0 399.4L417.0 400.4L420.0 401.5L423.0 402.6L426.0 403.7L429.0 404.8L432.0 405.8L435.0 406.9L438.0 408.0L441.0 409.1L444.0 410.2L447.0 411.2L450.0 412.3L453.0 413.4L456.0 414.5L459.0 415.6L462.0 416.7L465.0 417.7L468.0 418.8L471.0 419.9L474.0 421.0L477.0 422.1L480.0 423.2L483.0 424.3L486.0 425.5L489.0 426.6L492.0 427.7L495.0 428.8L498.0 430.0L501.0 431.1L504.0 432.2L507.0 433.4L510.0 434.5L513.0 435.6L516.0 436.8L519.0 437.9L522.0 439.0L525.0 440.1L528.0 441.3L531.0 442.4L534.0 443.5L537.0 444.5L540.0 445.4L543.0 446.3L546.0 447.2L549.0 448.1L552.0 449.0L555.0 449.9L558.0 450.8L561.0 451.7L564.0 452.6L567.0 453.5L570.0 454.4L573.0 455.3L576.0 456.2L579.0 457.1L582.0 458.0L585.0 458.9L588.0 459.8L591.0 460.7L594.0 461.6L597.0 461.9L600.0 462.3L603.0 462.7L606.0 463.1L609.0 463.4L612.0 463.8L615.0 464.2L618.0 464.6L621.0 464.9L624.0 465.4L627.0 465.8L630.0 466.3L633.0 466.7L636.0 467.2L639.0 467.6M270.0 364.6L273.0 365.3L276.0 366.0L279.0 366.7L282.0 367.4L285.0 368.2L288.0 368.9L291.0 369.6L294.0 370.3L297.0 371.0L300.0 371.8L303.0 372.5L306.0 373.2L309.0 373.9L312.0 374.6L315.0 375.4L318.0 376.1L321.0 376.8L324.0 377.5L327.0 378.2L330.0 379.0L333.0 379.7L336.0 380.4L339.0 381.0L342.0 381.7L345.0 382.3L348.0 383.0L351.0 383.6L354.0 384.2L357.0 384.9L360.0 385.5L363.0 386.2L366.0 386.8L369.0 387.4L372.0 388.1L375.0 388.7L378.0 389.4L381.0 390.0L384.0 390.7L387.0 391.3L390.0 391.9L393.0 393.4L396.0 394.8L399.0 396.2L402.0 397.4L405.0 398.5L408.0 399.6L411.0 400.7L414.0 401.7L417.0 402.8L420.0 403.9L423.0 405.0L426.0 406.0L429.0 407.1L432.0 408.2L435.0 409.3L438.0 410.3L441.0 411.4L444.0 412.5L447.0 413.6L450.0 414.6L453.0 415.7L456.0 416.8L459.0 417.9L462.0 418.9L465.0 420.0L468.0 421.1L471.0 422.2L474.0 423.2L477.0 424.3L480.0 425.4L483.0 426.6L486.0 427.7L489.0 428.8L492.0 429.9L495.0 431.1L498.0 432.2L501.0 433.3L504.0 434.4L507.0 435.6L510.0 436.7L513.0 437.8L516.0 438.9L519.0 440.1L522.0 441.2L525.0 442.3L528.0 443.4L531.0 444.6L534.0 445.7L537.0 446.7L540.0 447.6L543.0 448.5L546.0 449.3L549.0 450.2L552.0 451.1L555.0 452.0L558.0 452.9L561.0 453.8L564.0 454.7L567.0 455.6L570.0 456.5L573.0 457.4L576.0 458.3L579.0 459.2L582.0 460.1L585.0 461.0L588.0 461.9L591.0 462.8L594.0 463.6L597.0 464.0L600.0 464.3L603.0 464.7L606.0 465.1L609.0 465.5L612.0 465.8L615.0 466.2L618.0 466.6L621.0 467.0L624.0 467.4L627.0 467.8L630.0 468.3L633.0 468.7L636.0 469.2L639.0 469.6M270.0 368.0L273.0 368.7L276.0 369.4L279.0 370.1L282.0 370.9L285.0 371.6L288.0 372.3L291.0 373.0L294.0 373.7L297.0 374.5L300.0 375.2L303.0 375.9L306.0 376.6L309.0 377.3L312.0 378.1L315.0 378.8L318.0 379.5L321.0 380.2L324.0 380.9L327.0 381.7L330.0 382.4L333.0 383.1L336.0 383.8L339.0 384.5L342.0 385.1L345.0 385.7L348.0 386.4L351.0 387.0L354.0 387.6L357.0 388.3L360.0 388.9L363.0 389.6L366.0 390.2L369.0 390.8L372.0 391.5L375.0 392.1L378.0 392.7L381.0 393.4L384.0 394.0L387.0 394.6L390.0 395.3L393.0 395.9L396.0 397.2L399.0 398.6L402.0 399.8L405.0 400.9L408.0 402.0L411.0 403.0L414.0 404.1L417.0 405.2L420.0 406.2L423.0 407.3L426.0 408.4L429.0 409.4L432.0 410.5L435.0 411.6L438.0 412.7L441.0 413.7L444.0 414.8L447.0 415.9L450.0 416.9L453.0 418.0L456.0 419.1L459.0 420.1L462.0 421.2L465.0 422.3L468.0 423.4L471.0 424.4L474.0 425.5L477.0 426.6L480.0 427.7L483.0 428.8L486.0 429.9L489.0 431.0L492.0 432.2L495.0 433.3L498.0 434.4L501.0 435.5L504.0 436.6L507.0 437.8L510.0 438.9L513.0 440.0L516.0 441.1L519.0 442.2L522.0 443.4L525.0 444.5L528.0 445.6L531.0 446.7L534.0 447.8L537.0 448.8L540.0 449.7L543.0 450.6L546.0 451.5L549.0 452.4L552.0 453.3L555.0 454.1L558.0 455.0L561.0 455.9L564.0 456.8L567.0 457.7L570.0 458.6L573.0 459.5L576.0 460.4L579.0 461.3L582.0 462.1L585.0 463.0L588.0 463.9L591.0 464.8L594.0 465.7L597.0 466.0L600.0 466.4L603.0 466.8L606.0 467.1L609.0 467.5L612.0 467.9L615.0 468.2L618.0 468.6L621.0 469.0L624.0 469.4L627.0 469.8L630.0 470.3L633.0 470.7L636.0 471.2L639.0 471.6M270.0 371.4L273.0 372.1L276.0 372.9L279.0 373.6L282.0 374.3L285.0 375.0L288.0 375.7L291.0 376.5L294.0 377.2L297.0 377.9L300.0 378.6L303.0 379.3L306.0 380.1L309.0 380.8L312.0 381.5L315.0 382.2L318.0 382.9L321.0 383.7L324.0 384.4L327.0 385.1L330.0 385.8L333.0 386.5L336.0 387.3L339.0 387.9L342.0 388.5L345.0 389.2L348.0 389.8L351.0 390.4L354.0 391.0L357.0 391.7L360.0 392.3L363.0 392.9L366.0 393.6L369.0 394.2L372.0 394.8L375.0 395.5L378.0 396.1L381.0 396.7L384.0 397.4L387.0 398.0L390.0 398.6L393.0 399.3L396.0 399.9L399.0 401.0L402.0 402.2L405.0 403.3L408.0 404.3L411.0 405.4L414.0 406.5L417.0 407.5L420.0 408.6L423.0 409.7L426.0 410.7L429.0 411.8L432.0 412.8L435.0 413.9L438.0 415.0L441.0 416.0L444.0 417.1L447.0 418.2L450.0 419.2L453.0 420.3L456.0 421.4L459.0 422.4L462.0 423.5L465.0 424.6L468.0 425.6L471.0 426.7L474.0 427.8L477.0 428.8L480.0 429.9L483.0 431.1L486.0 432.2L489.0 433.3L492.0 434.4L495.0 435.5L498.0 436.6L501.0 437.7L504.0 438.9L507.0 440.0L510.0 441.1L513.0 442.2L516.0 443.3L519.0 444.4L522.0 445.5L525.0 446.7L528.0 447.8L531.0 448.9L534.0 450.0L537.0 451.0L540.0 451.8L543.0 452.7L546.0 453.6L549.0 454.5L552.0 455.4L555.0 456.3L558.0 457.2L561.0 458.0L564.0 458.9L567.0 459.8L570.0 460.7L573.0 461.6L576.0 462.5L579.0 463.3L582.0 464.2L585.0 465.1L588.0 466.0L591.0 466.9L594.0 467.7L597.0 468.1L600.0 468.4L603.0 468.8L606.0 469.2L609.0 469.5L612.0 469.9L615.0 470.2L618.0 470.6L621.0 471.0L624.0 471.4L627.0 471.8L630.0 472.3L633.0 472.7L636.0 473.2L639.0 473.6M270.0 374.9L273.0 375.6L276.0 376.3L279.0 377.0L282.0 377.7L285.0 378.5L288.0 379.2L291.0 379.9L294.0 380.6L297.0 381.3L300.0 382.1L303.0 382.8L306.0 383.5L309.0 384.2L312.0 384.9L315.0 385.7L318.0 386.4L321.0 387.1L324.0 387.8L327.0 388.5L330.0 389.3L333.0 390.0L336.0 390.7L339.0 391.3L342.0 391.9L345.0 392.6L348.0 393.2L351.0 393.8L354.0 394.5L357.0 395.1L360.0 395.7L363.0 396.3L366.0 397.0L369.0 397.6L372.0 398.2L375.0 398.8L378.0 399.5L381.0 400.1L384.0 400.7L387.0 401.3L390.0 402.0L393.0 402.6L396.0 403.2L399.0 403.8L402.0 404.6L405.0 405.6L408.0 406.7L411.0 407.8L414.0 408.8L417.0 409.9L420.0 410.9L423.0 412.0L426.0 413.1L429.0 414.1L432.0 415.2L435.0 416.2L438.0 417.3L441.0 418.4L444.0 419.4L447.0 420.5L450.0 421.5L453.0 422.6L456.0 423.7L459.0 424.7L462.0 425.8L465.0 426.8L468.0 427.9L471.0 429.0L474.0 430.0L477.0 431.1L480.0 432.2L483.0 433.3L486.0 434.4L489.0 435.5L492.0 436.6L495.0 437.7L498.0 438.8L501.0 440.0L504.0 441.1L507.0 442.2L510.0 443.3L513.0 444.4L516.0 445.5L519.0 446.6L522.0 447.7L525.0 448.8L528.0 449.9L531.0 451.0L534.0 452.1L537.0 453.1L540.0 454.0L543.0 454.9L546.0 455.7L549.0 456.6L552.0 457.5L555.0 458.4L558.0 459.3L561.0 460.1L564.0 461.0L567.0 461.9L570.0 462.8L573.0 463.7L576.0 464.5L579.0 465.4L582.0 466.3L585.0 467.2L588.0 468.0L591.0 468.9L594.0 469.8L597.0 470.1L600.0 470.5L603.0 470.8L606.0 471.2L609.0 471.5L612.0 471.9L615.0 472.2L618.0 472.6L621.0 473.0L624.0 473.4L627.0 473.8L630.0 474.3L633.0 474.7L636.0 475.2L639.0 475.6M270.0 378.3L273.0 379.0L276.0 379.7L279.0 380.5L282.0 381.2L285.0 381.9L288.0 382.6L291.0 383.3L294.0 384.1L297.0 384.8L300.0 385.5L303.0 386.2L306.0 386.9L309.0 387.7L312.0 388.4L315.0 389.1L318.0 389.8L321.0 390.5L324.0 391.3L327.0 392.0L330.0 392.7L333.0 393.4L336.0 394.1L339.0 394.8L342.0 395.4L345.0 396.0L348.0 396.6L351.0 397.2L354.0 397.9L357.0 398.5L360.0 399.1L363.0 399.7L366.0 400.3L369.0 401.0L372.0 401.6L375.0 402.2L378.0 402.8L381.0 403.4L384.0 404.1L387.0 404.7L390.0 405.3L393.0 405.9L396.0 406.5L399.0 407.2L402.0 407.6L405.0 408.0L408.0 409.1L411.0 410.1L414.0 411.2L417.0 412.2L420.0 413.3L423.0 414.3L426.0 415.4L429.0 416.5L432.0 417.5L435.0 418.6L438.0 419.6L441.0 420.7L444.0 421.7L447.0 422.8L450.0 423.8L453.0 424.9L456.0 425.9L459.0 427.0L462.0 428.1L465.0 429.1L468.0 430.2L471.0 431.2L474.0 432.3L477.0 433.3L480.0 434.4L483.0 435.5L486.0 436.6L489.0 437.7L492.0 438.9L495.0 440.0L498.0 441.1L501.0 442.2L504.0 443.3L507.0 444.4L510.0 445.5L513.0 446.6L516.0 447.7L519.0 448.8L522.0 449.9L525.0 451.0L528.0 452.1L531.0 453.2L534.0 454.3L537.0 455.3L540.0 456.1L543.0 457.0L546.0 457.9L549.0 458.8L552.0 459.6L555.0 460.5L558.0 461.4L561.0 462.2L564.0 463.1L567.0 464.0L570.0 464.9L573.0 465.7L576.0 466.6L579.0 467.5L582.0 468.4L585.0 469.2L588.0 470.1L591.0 471.0L594.0 471.8L597.0 472.2L600.0 472.5L603.0 472.9L606.0 473.2L609.0 473.6L612.0 473.9L615.0 474.3L618.0 474.6L621.0 475.0L624.0 475.4L627.0 475.8L630.0 476.3L633.0 476.7L636.0 477.2L639.0 477.6M270.0 381.7L273.0 382.5L276.0 383.2L279.0 383.9L282.0 384.6L285.0 385.3L288.0 386.1L291.0 386.8L294.0 387.5L297.0 388.2L300.0 388.9L303.0 389.7L306.0 390.4L309.0 391.1L312.0 391.8L315.0 392.5L318.0 393.2L321.0 394.0L324.0 394.7L327.0 395.4L330.0 396.1L333.0 396.9L336.0 397.6L339.0 398.2L342.0 398.8L345.0 399.4L348.0 400.0L351.0 400.6L354.0 401.3L357.0 401.9L360.0 402.5L363.0 403.1L366.0 403.7L369.0 404.3L372.0 405.0L375.0 405.6L378.0 406.2L381.0 406.8L384.0 407.4L387.0 408.0L390.0 408.6L393.0 409.3L396.0 409.9L399.0 410.5L402.0 410.9L405.0 411.2L408.0 411.5L411.0 412.5L414.0 413.6L417.0 414.6L420.0 415.6L423.0 416.7L426.0 417.7L429.0 418.8L432.0 419.8L435.0 420.9L438.0 421.9L441.0 423.0L444.0 424.0L447.0 425.1L450.0 426.1L453.0 427.2L456.0 428.2L459.0 429.3L462.0 430.3L465.0 431.4L468.0 432.4L471.0 433.5L474.0 434.5L477.0 435.6L480.0 436.7L483.0 437.8L486.0 438.9L489.0 440.0L492.0 441.1L495.0 442.2L498.0 443.3L501.0 444.4L504.0 445.5L507.0 446.6L510.0 447.7L513.0 448.8L516.0 449.9L519.0 451.0L522.0 452.1L525.0 453.2L528.0 454.3L531.0 455.4L534.0 456.5L537.0 457.4L540.0 458.3L543.0 459.1L546.0 460.0L549.0 460.9L552.0 461.8L555.0 462.6L558.0 463.5L561.0 464.4L564.0 465.2L567.0 466.1L570.0 467.0L573.0 467.8L576.0 468.7L579.0 469.6L582.0 470.4L585.0 471.3L588.0 472.2L591.0 473.0L594.0 473.9L597.0 474.2L600.0 474.5L603.0 474.9L606.0 475.2L609.0 475.6L612.0 475.9L615.0 476.3L618.0 476.6L621.0 477.0L624.0 477.4L627.0 477.8L630.0 478.3L633.0 478.7L636.0 479.2L639.0 479.6M270.0 385.2L273.0 385.9L276.0 386.6L279.0 387.3L282.0 388.0L285.0 388.8L288.0 389.5L291.0 390.2L294.0 390.9L297.0 391.6L300.0 392.4L303.0 393.1L306.0 393.8L309.0 394.5L312.0 395.2L315.0 396.0L318.0 396.7L321.0 397.4L324.0 398.1L327.0 398.8L330.0 399.6L333.0 400.3L336.0 401.0L339.0 401.6L342.0 402.2L345.0 402.8L348.0 403.4L351.0 404.1L354.0 404.7L357.0 405.3L360.0 405.9L363.0 406.5L366.0 407.1L369.0 407.7L372.0 408.3L375.0 408.9L378.0 409.5L381.0 410.2L384.0 410.8L387.0 411.4L390.0 412.0L393.0 412.6L396.0 413.2L399.0 413.8L402.0 414.2L405.0 414.5L408.0 414.8L411.0 415.0L414.0 415.9L417.0 417.0L420.0 418.0L423.0 419.0L426.0 420.1L429.0 421.1L432.0 422.2L435.0 423.2L438.0 424.3L441.0 425.3L444.0 426.4L447.0 427.4L450.0 428.4L453.0 429.5L456.0 430.5L459.0 431.6L462.0 432.6L465.0 433.7L468.0 434.7L471.0 435.7L474.0 436.8L477.0 437.8L480.0 438.9L483.0 440.0L486.0 441.1L489.0 442.2L492.0 443.3L495.0 444.4L498.0 445.5L501.0 446.6L504.0 447.7L507.0 448.8L510.0 449.9L513.0 451.0L516.0 452.1L519.0 453.1L522.0 454.2L525.0 455.3L528.0 456.4L531.0 457.5L534.0 458.6L537.0 459.6L540.0 460.4L543.0 461.3L546.0 462.2L549.0 463.0L552.0 463.9L555.0 464.7L558.0 465.6L561.0 466.5L564.0 467.3L567.0 468.2L570.0 469.1L573.0 469.9L576.0 470.8L579.0 471.6L582.0 472.5L585.0 473.4L588.0 474.2L591.0 475.1L594.0 475.9L597.0 476.2L600.0 476.6L603.0 476.9L606.0 477.3L609.0 477.6L612.0 478.0L615.0 478.3L618.0 478.6L621.0 479.0L624.0 479.4L627.0 479.8L630.0 480.3L633.0 480.7L636.0 481.2L639.0 481.6M270.0 388.6L273.0 389.3L276.0 390.0L279.0 390.8L282.0 391.5L285.0 392.2L288.0 392.9L291.0 393.6L294.0 394.4L297.0 395.1L300.0 395.8L303.0 396.5L306.0 397.2L309.0 398.0L312.0 398.7L315.0 399.4L318.0 400.1L321.0 400.8L324.0 401.6L327.0 402.3L330.0 403.0L333.0 403.7L336.0 404.4L339.0 405.0L342.0 405.7L345.0 406.3L348.0 406.9L351.0 407.5L354.0 408.1L357.0 408.7L360.0 409.3L363.0 409.9L366.0 410.5L369.0 411.1L372.0 411.7L375.0 412.3L378.0 412.9L381.0 413.5L384.0 414.1L387.0 414.7L390.0 415.3L393.0 415.9L396.0 416.5L399.0 417.1L402.0 417.6L405.0 417.8L408.0 418.1L411.0 418.3L414.0 418.6L417.0 419.3L420.0 420.4L423.0 421.4L426.0 422.4L429.0 423.5L432.0 424.5L435.0 425.5L438.0 426.6L441.0 427.6L444.0 428.7L447.0 429.7L450.0 430.7L453.0 431.8L456.0 432.8L459.0 433.9L462.0 434.9L465.0 435.9L468.0 437.0L471.0 438.0L474.0 439.0L477.0 440.1L480.0 441.2L483.0 442.3L486.0 443.4L489.0 444.4L492.0 445.5L495.0 446.6L498.0 447.7L501.0 448.8L504.0 449.9L507.0 451.0L510.0 452.1L513.0 453.2L516.0 454.2L519.0 455.3L522.0 456.4L525.0 457.5L528.0 458.6L531.0 459.7L534.0 460.8L537.0 461.7L540.0 462.6L543.0 463.4L546.0 464.3L549.0 465.1L552.0 466.0L555.0 466.9L558.0 467.7L561.0 468.6L564.0 469.4L567.0 470.3L570.0 471.1L573.0 472.0L576.0 472.9L579.0 473.7L582.0 474.6L585.0 475.4L588.0 476.3L591.0 477.2L594.0 478.0L597.0 478.3L600.0 478.6L603.0 479.0L606.0 479.3L609.0 479.6L612.0 480.0L615.0 480.3L618.0 480.6L621.0 481.0L624.0 481.4L627.0 481.8L630.0 482.3L633.0 482.7L636.0 483.2L639.0 483.6M270.0 392.0L273.0 392.8L276.0 393.5L279.0 394.2L282.0 394.9L285.0 395.6L288.0 396.4L291.0 397.1L294.0 397.8L297.0 398.5L300.0 399.2L303.0 400.0L306.0 400.7L309.0 401.4L312.0 402.1L315.0 402.8L318.0 403.6L321.0 404.3L324.0 405.0L327.0 405.7L330.0 406.4L333.0 407.2L336.0 407.9L339.0 408.5L342.0 409.1L345.0 409.7L348.0 410.3L351.0 410.9L354.0 411.5L357.0 412.1L360.0 412.7L363.0 413.3L366.0 413.9L369.0 414.5L372.0 415.1L375.0 415.7L378.0 416.3L381.0 416.9L384.0 417.5L387.0 418.1L390.0 418.7L393.0 419.3L396.0 419.9L399.0 420.5L402.0 420.9L405.0 421.1L408.0 421.4L411.0 421.6L414.0 421.9L417.0 422.1L420.0 422.7L423.0 423.7L426.0 424.8L429.0 425.8L432.0 426.8L435.0 427.9L438.0 428.9L441.0 429.9L444.0 431.0L447.0 432.0L450.0 433.0L453.0 434.1L456.0 435.1L459.0 436.1L462.0 437.2L465.0 438.2L468.0 439.2L471.0 440.3L474.0 441.3L477.0 442.4L480.0 443.4L483.0 444.5L486.0 445.6L489.0 446.7L492.0 447.8L495.0 448.8L498.0 449.9L501.0 451.0L504.0 452.1L507.0 453.2L510.0 454.3L513.0 455.3L516.0 456.4L519.0 457.5L522.0 458.6L525.0 459.7L528.0 460.8L531.0 461.8L534.0 462.9L537.0 463.9L540.0 464.7L543.0 465.6L546.0 466.4L549.0 467.3L552.0 468.1L555.0 469.0L558.0 469.8L561.0 470.7L564.0 471.5L567.0 472.4L570.0 473.2L573.0 474.1L576.0 474.9L579.0 475.8L582.0 476.6L585.0 477.5L588.0 478.4L591.0 479.2L594.0 480.0L597.0 480.3L600.0 480.7L603.0 481.0L606.0 481.3L609.0 481.7L612.0 482.0L615.0 482.3L618.0 482.6L621.0 483.0L624.0 483.4L627.0 483.8L630.0 484.3L633.0 484.7L636.0 485.2L639.0 485.6M270.0 395.5L273.0 396.2L276.0 396.9L279.0 397.6L282.0 398.4L285.0 399.1L288.0 399.8L291.0 400.5L294.0 401.2L297.0 402.0L300.0 402.7L303.0 403.4L306.0 404.1L309.0 404.8L312.0 405.6L315.0 406.3L318.0 407.0L321.0 407.7L324.0 408.4L327.0 409.2L330.0 409.9L333.0 410.6L336.0 411.3L339.0 411.9L342.0 412.5L345.0 413.1L348.0 413.7L351.0 414.3L354.0 414.9L357.0 415.5L360.0 416.1L363.0 416.7L366.0 417.3L369.0 417.9L372.0 418.4L375.0 419.0L378.0 419.6L381.0 420.2L384.0 420.8L387.0 421.4L390.0 422.0L393.0 422.6L396.0 423.2L399.0 423.8L402.0 424.2L405.0 424.4L408.0 424.7L411.0 424.9L414.0 425.2L417.0 425.4L420.0 425.7L423.0 426.1L426.0 427.1L429.0 428.1L432.0 429.2L435.0 430.2L438.0 431.2L441.0 432.3L444.0 433.3L447.0 434.3L450.0 435.3L453.0 436.4L456.0 437.4L459.0 438.4L462.0 439.5L465.0 440.5L468.0 441.5L471.0 442.5L474.0 443.6L477.0 444.6L480.0 445.7L483.0 446.8L486.0 447.8L489.0 448.9L492.0 450.0L495.0 451.1L498.0 452.1L501.0 453.2L504.0 454.3L507.0 455.4L510.0 456.5L513.0 457.5L516.0 458.6L519.0 459.7L522.0 460.8L525.0 461.8L528.0 462.9L531.0 464.0L534.0 465.1L537.0 466.0L540.0 466.9L543.0 467.7L546.0 468.6L549.0 469.4L552.0 470.2L555.0 471.1L558.0 471.9L561.0 472.8L564.0 473.6L567.0 474.5L570.0 475.3L573.0 476.2L576.0 477.0L579.0 477.9L582.0 478.7L585.0 479.6L588.0 480.4L591.0 481.3L594.0 482.1L597.0 482.4L600.0 482.7L603.0 483.0L606.0 483.4L609.0 483.7L612.0 484.0L615.0 484.3L618.0 484.7L621.0 485.0L624.0 485.4L627.0 485.8L630.0 486.3L633.0 486.7L636.0 487.2L639.0 487.6M270.0 398.9L273.0 399.6L276.0 400.4L279.0 401.1L282.0 401.8L285.0 402.5L288.0 403.2L291.0 404.0L294.0 404.7L297.0 405.4L300.0 406.1L303.0 406.8L306.0 407.6L309.0 408.3L312.0 409.0L315.0 409.7L318.0 410.4L321.0 411.2L324.0 411.9L327.0 412.6L330.0 413.3L333.0 414.0L336.0 414.8L339.0 415.3L342.0 415.9L345.0 416.5L348.0 417.1L351.0 417.7L354.0 418.3L357.0 418.9L360.0 419.5L363.0 420.1L366.0 420.6L369.0 421.2L372.0 421.8L375.0 422.4L378.0 423.0L381.0 423.6L384.0 424.2L387.0 424.8L390.0 425.4L393.0 425.9L396.0 426.5L399.0 427.1L402.0 427.5L405.0 427.8L408.0 428.0L411.0 428.2L414.0 428.5L417.0 428.7L420.0 429.0L423.0 429.2L426.0 429.5L429.0 430.5L432.0 431.5L435.0 432.5L438.0 433.6L441.0 434.6L444.0 435.6L447.0 436.6L450.0 437.6L453.0 438.7L456.0 439.7L459.0 440.7L462.0 441.7L465.0 442.8L468.0 443.8L471.0 444.8L474.0 445.8L477.0 446.9L480.0 447.9L483.0 449.0L486.0 450.1L489.0 451.1L492.0 452.2L495.0 453.3L498.0 454.4L501.0 455.4L504.0 456.5L507.0 457.6L510.0 458.7L513.0 459.7L516.0 460.8L519.0 461.9L522.0 462.9L525.0 464.0L528.0 465.1L531.0 466.2L534.0 467.2L537.0 468.2L540.0 469.0L543.0 469.8L546.0 470.7L549.0 471.5L552.0 472.4L555.0 473.2L558.0 474.1L561.0 474.9L564.0 475.7L567.0 476.6L570.0 477.4L573.0 478.3L576.0 479.1L579.0 480.0L582.0 480.8L585.0 481.6L588.0 482.5L591.0 483.3L594.0 484.1L597.0 484.4L600.0 484.7L603.0 485.1L606.0 485.4L609.0 485.7L612.0 486.0L615.0 486.3L618.0 486.7L621.0 487.0L624.0 487.4L627.0 487.8L630.0 488.3L633.0 488.7L636.0 489.2L639.0 489.6M270.0 402.3L273.0 403.1L276.0 403.8L279.0 404.5L282.0 405.2L285.0 405.9L288.0 406.7L291.0 407.4L294.0 408.1L297.0 408.8L300.0 409.5L303.0 410.3L306.0 411.0L309.0 411.7L312.0 412.4L315.0 413.1L318.0 413.9L321.0 414.6L324.0 415.3L327.0 416.0L330.0 416.7L333.0 417.5L336.0 418.2L339.0 418.8L342.0 419.4L345.0 419.9L348.0 420.5L351.0 421.1L354.0 421.7L357.0 422.3L360.0 422.9L363.0 423.4L366.0 424.0L369.0 424.6L372.0 425.2L375.0 425.8L378.0 426.4L381.0 426.9L384.0 427.5L387.0 428.1L390.0 428.7L393.0 429.3L396.0 429.9L399.0 430.5L402.0 430.8L405.0 431.1L408.0 431.3L411.0 431.6L414.0 431.8L417.0 432.0L420.0 432.3L423.0 432.5L426.0 432.7L429.0 433.0L432.0 433.8L435.0 434.9L438.0 435.9L441.0 436.9L444.0 437.9L447.0 438.9L450.0 439.9L453.0 441.0L456.0 442.0L459.0 443.0L462.0 444.0L465.0 445.0L468.0 446.1L471.0 447.1L474.0 448.1L477.0 449.1L480.0 450.2L483.0 451.2L486.0 452.3L489.0 453.4L492.0 454.4L495.0 455.5L498.0 456.6L501.0 457.7L504.0 458.7L507.0 459.8L510.0 460.9L513.0 461.9L516.0 463.0L519.0 464.1L522.0 465.1L525.0 466.2L528.0 467.3L531.0 468.3L534.0 469.4L537.0 470.3L540.0 471.1L543.0 472.0L546.0 472.8L549.0 473.7L552.0 474.5L555.0 475.3L558.0 476.2L561.0 477.0L564.0 477.8L567.0 478.7L570.0 479.5L573.0 480.4L576.0 481.2L579.0 482.0L582.0 482.9L585.0 483.7L588.0 484.5L591.0 485.4L594.0 486.2L597.0 486.5L600.0 486.8L603.0 487.1L606.0 487.4L609.0 487.7L612.0 488.0L615.0 488.4L618.0 488.7L621.0 489.0L624.0 489.4L627.0 489.8L630.0 490.3L633.0 490.7L636.0 491.2L639.0 491.6M270.0 405.8L273.0 406.5L276.0 407.2L279.0 407.9L282.0 408.7L285.0 409.4L288.0 410.1L291.0 410.8L294.0 411.5L297.0 412.3L300.0 413.0L303.0 413.7L306.0 414.4L309.0 415.1L312.0 415.9L315.0 416.6L318.0 417.3L321.0 418.0L324.0 418.7L327.0 419.5L330.0 420.2L333.0 420.9L336.0 421.6L339.0 422.2L342.0 422.8L345.0 423.4L348.0 423.9L351.0 424.5L354.0 425.1L357.0 425.7L360.0 426.3L363.0 426.8L366.0 427.4L369.0 428.0L372.0 428.6L375.0 429.1L378.0 429.7L381.0 430.3L384.0 430.9L387.0 431.5L390.0 432.0L393.0 432.6L396.0 433.2L399.0 433.8L402.0 434.2L405.0 434.4L408.0 434.6L411.0 434.9L414.0 435.1L417.0 435.3L420.0 435.6L423.0 435.8L426.0 436.0L429.0 436.3L432.0 436.5L435.0 437.2L438.0 438.2L441.0 439.2L444.0 440.2L447.0 441.2L450.0 442.2L453.0 443.3L456.0 444.3L459.0 445.3L462.0 446.3L465.0 447.3L468.0 448.3L471.0 449.3L474.0 450.3L477.0 451.4L480.0 452.4L483.0 453.5L486.0 454.6L489.0 455.6L492.0 456.7L495.0 457.7L498.0 458.8L501.0 459.9L504.0 460.9L507.0 462.0L510.0 463.0L513.0 464.1L516.0 465.2L519.0 466.2L522.0 467.3L525.0 468.4L528.0 469.4L531.0 470.5L534.0 471.5L537.0 472.5L540.0 473.3L543.0 474.1L546.0 475.0L549.0 475.8L552.0 476.6L555.0 477.5L558.0 478.3L561.0 479.1L564.0 479.9L567.0 480.8L570.0 481.6L573.0 482.4L576.0 483.3L579.0 484.1L582.0 484.9L585.0 485.8L588.0 486.6L591.0 487.4L594.0 488.2L597.0 488.5L600.0 488.8L603.0 489.1L606.0 489.4L609.0 489.8L612.0 490.1L615.0 490.4L618.0 490.7L621.0 491.0L624.0 491.4L627.0 491.8L630.0 492.3L633.0 492.7L636.0 493.2L639.0 493.6M270.0 409.2L273.0 409.9L276.0 410.7L279.0 411.4L282.0 412.1L285.0 412.8L288.0 413.5L291.0 414.3L294.0 415.0L297.0 415.7L300.0 416.4L303.0 417.1L306.0 417.9L309.0 418.6L312.0 419.3L315.0 420.0L318.0 420.7L321.0 421.5L324.0 422.2L327.0 422.9L330.0 423.6L333.0 424.3L336.0 425.1L339.0 425.6L342.0 426.2L345.0 426.8L348.0 427.4L351.0 427.9L354.0 428.5L357.0 429.1L360.0 429.6L363.0 430.2L366.0 430.8L369.0 431.4L372.0 431.9L375.0 432.5L378.0 433.1L381.0 433.7L384.0 434.2L387.0 434.8L390.0 435.4L393.0 436.0L396.0 436.5L399.0 437.1L402.0 437.5L405.0 437.7L408.0 437.9L411.0 438.2L414.0 438.4L417.0 438.6L420.0 438.8L423.0 439.1L426.0 439.3L429.0 439.5L432.0 439.8L435.0 440.0L438.0 440.5L441.0 441.5L444.0 442.5L447.0 443.5L450.0 444.5L453.0 445.6L456.0 446.6L459.0 447.6L462.0 448.6L465.0 449.6L468.0 450.6L471.0 451.6L474.0 452.6L477.0 453.6L480.0 454.7L483.0 455.7L486.0 456.8L489.0 457.8L492.0 458.9L495.0 460.0L498.0 461.0L501.0 462.1L504.0 463.1L507.0 464.2L510.0 465.2L513.0 466.3L516.0 467.4L519.0 468.4L522.0 469.5L525.0 470.5L528.0 471.6L531.0 472.6L534.0 473.7L537.0 474.6L540.0 475.4L543.0 476.3L546.0 477.1L549.0 477.9L552.0 478.7L555.0 479.6L558.0 480.4L561.0 481.2L564.0 482.0L567.0 482.9L570.0 483.7L573.0 484.5L576.0 485.4L579.0 486.2L582.0 487.0L585.0 487.8L588.0 488.7L591.0 489.5L594.0 490.3L597.0 490.6L600.0 490.9L603.0 491.2L606.0 491.5L609.0 491.8L612.0 492.1L615.0 492.4L618.0 492.7L621.0 493.0L624.0 493.4L627.0 493.8L630.0 494.3L633.0 494.7L636.0 495.2L639.0 495.6M270.0 412.7L273.0 413.4L276.0 414.1L279.0 414.8L282.0 415.5L285.0 416.3L288.0 417.0L291.0 417.7L294.0 418.4L297.0 419.1L300.0 419.9L303.0 420.6L306.0 421.3L309.0 422.0L312.0 422.7L315.0 423.5L318.0 424.2L321.0 424.9L324.0 425.6L327.0 426.3L330.0 427.1L333.0 427.8L336.0 428.5L339.0 429.1L342.0 429.6L345.0 430.2L348.0 430.8L351.0 431.3L354.0 431.9L357.0 432.5L360.0 433.0L363.0 433.6L366.0 434.2L369.0 434.7L372.0 435.3L375.0 435.9L378.0 436.5L381.0 437.0L384.0 437.6L387.0 438.2L390.0 438.7L393.0 439.3L396.0 439.9L399.0 440.4L402.0 440.8L405.0 441.0L408.0 441.2L411.0 441.5L414.0 441.7L417.0 441.9L420.0 442.1L423.0 442.4L426.0 442.6L429.0 442.8L432.0 443.0L435.0 443.2L438.0 443.5L441.0 443.8L444.0 444.8L447.0 445.8L450.0 446.9L453.0 447.9L456.0 448.9L459.0 449.9L462.0 450.9L465.0 451.9L468.0 452.9L471.0 453.9L474.0 454.9L477.0 455.9L480.0 456.9L483.0 458.0L486.0 459.0L489.0 460.1L492.0 461.1L495.0 462.2L498.0 463.2L501.0 464.3L504.0 465.3L507.0 466.4L510.0 467.4L513.0 468.5L516.0 469.5L519.0 470.6L522.0 471.6L525.0 472.7L528.0 473.8L531.0 474.8L534.0 475.9L537.0 476.8L540.0 477.6L543.0 478.4L546.0 479.2L549.0 480.0L552.0 480.9L555.0 481.7L558.0 482.5L561.0 483.3L564.0 484.2L567.0 485.0L570.0 485.8L573.0 486.6L576.0 487.4L579.0 488.3L582.0 489.1L585.0 489.9L588.0 490.7L591.0 491.5L594.0 492.3L597.0 492.6L600.0 492.9L603.0 493.2L606.0 493.5L609.0 493.8L612.0 494.1L615.0 494.4L618.0 494.7L621.0 495.0L624.0 495.4L627.0 495.8L630.0 496.3L633.0 496.7L636.0 497.2L639.0 497.6M270.0 416.1L273.0 416.8L276.0 417.5L279.0 418.2L282.0 419.0L285.0 419.7L288.0 420.4L291.0 421.1L294.0 421.9L297.0 422.6L300.0 423.3L303.0 424.0L306.0 424.7L309.0 425.5L312.0 426.2L315.0 426.9L318.0 427.6L321.0 428.3L324.0 429.1L327.0 429.8L330.0 430.5L333.0 431.2L336.0 431.9L339.0 432.5L342.0 433.1L345.0 433.6L348.0 434.2L351.0 434.7L354.0 435.3L357.0 435.9L360.0 436.4L363.0 437.0L366.0 437.6L369.0 438.1L372.0 438.7L375.0 439.3L378.0 439.8L381.0 440.4L384.0 440.9L387.0 441.5L390.0 442.1L393.0 442.6L396.0 443.2L399.0 443.8L402.0 444.1L405.0 444.3L408.0 444.6L411.0 444.8L414.0 445.0L417.0 445.2L420.0 445.4L423.0 445.6L426.0 445.9L429.0 446.1L432.0 446.3L435.0 446.5L438.0 446.7L441.0 446.9L444.0 447.2L447.0 448.2L450.0 449.2L453.0 450.1L456.0 451.1L459.0 452.1L462.0 453.1L465.0 454.1L468.0 455.1L471.0 456.1L474.0 457.1L477.0 458.1L480.0 459.2L483.0 460.2L486.0 461.3L489.0 462.3L492.0 463.4L495.0 464.4L498.0 465.5L501.0 466.5L504.0 467.5L507.0 468.6L510.0 469.6L513.0 470.7L516.0 471.7L519.0 472.8L522.0 473.8L525.0 474.9L528.0 475.9L531.0 477.0L534.0 478.0L537.0 478.9L540.0 479.7L543.0 480.5L546.0 481.4L549.0 482.2L552.0 483.0L555.0 483.8L558.0 484.6L561.0 485.4L564.0 486.3L567.0 487.1L570.0 487.9L573.0 488.7L576.0 489.5L579.0 490.3L582.0 491.1L585.0 492.0L588.0 492.8L591.0 493.6L594.0 494.4L597.0 494.7L600.0 494.9L603.0 495.2L606.0 495.5L609.0 495.8L612.0 496.1L615.0 496.4L618.0 496.7L621.0 497.0L624.0 497.4L627.0 497.8L630.0 498.3L633.0 498.7L636.0 499.2L639.0 499.6M270.0 419.5L273.0 420.2L276.0 421.0L279.0 421.7L282.0 422.4L285.0 423.1L288.0 423.8L291.0 424.6L294.0 425.3L297.0 426.0L300.0 426.7L303.0 427.4L306.0 428.2L309.0 428.9L312.0 429.6L315.0 430.3L318.0 431.0L321.0 431.8L324.0 432.5L327.0 433.2L330.0 433.9L333.0 434.6L336.0 435.4L339.0 435.9L342.0 436.5L345.0 437.0L348.0 437.6L351.0 438.2L354.0 438.7L357.0 439.3L360.0 439.8L363.0 440.4L366.0 440.9L369.0 441.5L372.0 442.1L375.0 442.6L378.0 443.2L381.0 443.7L384.0 444.3L387.0 444.9L390.0 445.4L393.0 446.0L396.0 446.5L399.0 447.1L402.0 447.4L405.0 447.7L408.0 447.9L411.0 448.1L414.0 448.3L417.0 448.5L420.0 448.7L423.0 448.9L426.0 449.1L429.0 449.3L432.0 449.6L435.0 449.8L438.0 450.0L441.0 450.2L444.0 450.4L447.0 450.6L450.0 451.5L453.0 452.4L456.0 453.4L459.0 454.4L462.0 455.4L465.0 456.4L468.0 457.4L471.0 458.4L474.0 459.4L477.0 460.4L480.0 461.4L483.0 462.5L486.0 463.5L489.0 464.5L492.0 465.6L495.0 466.6L498.0 467.7L501.0 468.7L504.0 469.8L507.0 470.8L510.0 471.8L513.0 472.9L516.0 473.9L519.0 475.0L522.0 476.0L525.0 477.0L528.0 478.1L531.0 479.1L534.0 480.2L537.0 481.1L540.0 481.9L543.0 482.7L546.0 483.5L549.0 484.3L552.0 485.1L555.0 485.9L558.0 486.7L561.0 487.5L564.0 488.4L567.0 489.2L570.0 490.0L573.0 490.8L576.0 491.6L579.0 492.4L582.0 493.2L585.0 494.0L588.0 494.8L591.0 495.7L594.0 496.4L597.0 496.7L600.0 497.0L603.0 497.3L606.0 497.6L609.0 497.9L612.0 498.1L615.0 498.4L618.0 498.7L621.0 499.0L624.0 499.4L627.0 499.8L630.0 500.3L633.0 500.7L636.0 501.2L639.0 501.6M270.0 423.0L273.0 423.7L276.0 424.4L279.0 425.1L282.0 425.8L285.0 426.6L288.0 427.3L291.0 428.0L294.0 428.7L297.0 429.4L300.0 430.2L303.0 430.9L306.0 431.6L309.0 432.3L312.0 433.0L315.0 433.8L318.0 434.5L321.0 435.2L324.0 435.9L327.0 436.6L330.0 437.4L333.0 438.1L336.0 438.8L339.0 439.4L342.0 439.9L345.0 440.5L348.0 441.0L351.0 441.6L354.0 442.1L357.0 442.7L360.0 443.2L363.0 443.8L366.0 444.3L369.0 444.9L372.0 445.4L375.0 446.0L378.0 446.5L381.0 447.1L384.0 447.6L387.0 448.2L390.0 448.8L393.0 449.3L396.0 449.9L399.0 450.4L402.0 450.8L405.0 451.0L408.0 451.2L411.0 451.4L414.0 451.6L417.0 451.8L420.0 452.0L423.0 452.2L426.0 452.4L429.0 452.6L432.0 452.8L435.0 453.0L438.0 453.2L441.0 453.4L444.0 453.7L447.0 453.9L450.0 454.1L453.0 454.7L456.0 455.7L459.0 456.7L462.0 457.7L465.0 458.7L468.0 459.7L471.0 460.7L474.0 461.6L477.0 462.6L480.0 463.7L483.0 464.7L486.0 465.7L489.0 466.8L492.0 467.8L495.0 468.9L498.0 469.9L501.0 470.9L504.0 472.0L507.0 473.0L510.0 474.0L513.0 475.1L516.0 476.1L519.0 477.1L522.0 478.2L525.0 479.2L528.0 480.2L531.0 481.3L534.0 482.3L537.0 483.2L540.0 484.0L543.0 484.8L546.0 485.6L549.0 486.4L552.0 487.2L555.0 488.0L558.0 488.8L561.0 489.7L564.0 490.5L567.0 491.3L570.0 492.1L573.0 492.9L576.0 493.7L579.0 494.5L582.0 495.3L585.0 496.1L588.0 496.9L591.0 497.7L594.0 498.5L597.0 498.7L600.0 499.0L603.0 499.3L606.0 499.6L609.0 499.9L612.0 500.2L615.0 500.4L618.0 500.7L621.0 501.0L624.0 501.4L627.0 501.8L630.0 502.3L633.0 502.7L636.0 503.2L639.0 503.6M270.0 426.4L273.0 427.1L276.0 427.8L279.0 428.6L282.0 429.3L285.0 430.0L288.0 430.7L291.0 431.4L294.0 432.2L297.0 432.9L300.0 433.6L303.0 434.3L306.0 435.0L309.0 435.8L312.0 436.5L315.0 437.2L318.0 437.9L321.0 438.6L324.0 439.4L327.0 440.1L330.0 440.8L333.0 441.5L336.0 442.2L339.0 442.8L342.0 443.3L345.0 443.9L348.0 444.4L351.0 445.0L354.0 445.5L357.0 446.1L360.0 446.6L363.0 447.2L366.0 447.7L369.0 448.3L372.0 448.8L375.0 449.4L378.0 449.9L381.0 450.5L384.0 451.0L387.0 451.5L390.0 452.1L393.0 452.6L396.0 453.2L399.0 453.7L402.0 454.1L405.0 454.3L408.0 454.5L411.0 454.7L414.0 454.9L417.0 455.1L420.0 455.3L423.0 455.5L426.0 455.7L429.0 455.9L432.0 456.1L435.0 456.3L438.0 456.5L441.0 456.7L444.0 456.9L447.0 457.1L450.0 457.3L453.0 457.5L456.0 458.0L459.0 459.0L462.0 460.0L465.0 461.0L468.0 461.9L471.0 462.9L474.0 463.9L477.0 464.9L480.0 465.9L483.0 467.0L486.0 468.0L489.0 469.0L492.0 470.0L495.0 471.1L498.0 472.1L501.0 473.1L504.0 474.2L507.0 475.2L510.0 476.2L513.0 477.3L516.0 478.3L519.0 479.3L522.0 480.4L525.0 481.4L528.0 482.4L531.0 483.4L534.0 484.5L537.0 485.4L540.0 486.2L543.0 487.0L546.0 487.8L549.0 488.6L552.0 489.4L555.0 490.2L558.0 491.0L561.0 491.8L564.0 492.6L567.0 493.4L570.0 494.2L573.0 495.0L576.0 495.8L579.0 496.6L582.0 497.4L585.0 498.2L588.0 499.0L591.0 499.8L594.0 500.5L597.0 500.8L600.0 501.1L603.0 501.3L606.0 501.6L609.0 501.9L612.0 502.2L615.0 502.5L618.0 502.7L621.0 503.0L624.0 503.4L627.0 503.8L630.0 504.3L633.0 504.7L636.0 505.2L639.0 505.6M270.0 429.8L273.0 430.6L276.0 431.3L279.0 432.0L282.0 432.7L285.0 433.4L288.0 434.2L291.0 434.9L294.0 435.6L297.0 436.3L300.0 437.0L303.0 437.8L306.0 438.5L309.0 439.2L312.0 439.9L315.0 440.6L318.0 441.4L321.0 442.1L324.0 442.8L327.0 443.5L330.0 444.2L333.0 445.0L336.0 445.7L339.0 446.2L342.0 446.8L345.0 447.3L348.0 447.8L351.0 448.4L354.0 448.9L357.0 449.5L360.0 450.0L363.0 450.6L366.0 451.1L369.0 451.6L372.0 452.2L375.0 452.7L378.0 453.3L381.0 453.8L384.0 454.4L387.0 454.9L390.0 455.4L393.0 456.0L396.0 456.5L399.0 457.1L402.0 457.4L405.0 457.6L408.0 457.8L411.0 458.0L414.0 458.2L417.0 458.4L420.0 458.6L423.0 458.8L426.0 459.0L429.0 459.2L432.0 459.4L435.0 459.6L438.0 459.8L441.0 460.0L444.0 460.2L447.0 460.3L450.0 460.5L453.0 460.7L456.0 460.9L459.0 461.3L462.0 462.3L465.0 463.2L468.0 464.2L471.0 465.2L474.0 466.2L477.0 467.1L480.0 468.2L483.0 469.2L486.0 470.2L489.0 471.3L492.0 472.3L495.0 473.3L498.0 474.3L501.0 475.4L504.0 476.4L507.0 477.4L510.0 478.4L513.0 479.5L516.0 480.5L519.0 481.5L522.0 482.5L525.0 483.6L528.0 484.6L531.0 485.6L534.0 486.6L537.0 487.5L540.0 488.3L543.0 489.1L546.0 489.9L549.0 490.7L552.0 491.5L555.0 492.3L558.0 493.1L561.0 493.9L564.0 494.7L567.0 495.5L570.0 496.3L573.0 497.1L576.0 497.8L579.0 498.6L582.0 499.4L585.0 500.2L588.0 501.0L591.0 501.8L594.0 502.6L597.0 502.8L600.0 503.1L603.0 503.4L606.0 503.7L609.0 503.9L612.0 504.2L615.0 504.5L618.0 504.7L621.0 505.0L624.0 505.4L627.0 505.8L630.0 506.3L633.0 506.7L636.0 507.2L639.0 507.6M270.0 433.3L273.0 434.0L276.0 434.7L279.0 435.4L282.0 436.2L285.0 436.9L288.0 437.6L291.0 438.3L294.0 439.0L297.0 439.8L300.0 440.5L303.0 441.2L306.0 441.9L309.0 442.6L312.0 443.4L315.0 444.1L318.0 444.8L321.0 445.5L324.0 446.2L327.0 447.0L330.0 447.7L333.0 448.4L336.0 449.1L339.0 449.6L342.0 450.2L345.0 450.7L348.0 451.3L351.0 451.8L354.0 452.3L357.0 452.9L360.0 453.4L363.0 453.9L366.0 454.5L369.0 455.0L372.0 455.6L375.0 456.1L378.0 456.6L381.0 457.2L384.0 457.7L387.0 458.2L390.0 458.8L393.0 459.3L396.0 459.9L399.0 460.4L402.0 460.7L405.0 460.9L408.0 461.1L411.0 461.3L414.0 461.5L417.0 461.7L420.0 461.9L423.0 462.1L426.0 462.3L429.0 462.4L432.0 462.6L435.0 462.8L438.0 463.0L441.0 463.2L444.0 463.4L447.0 463.6L450.0 463.8L453.0 464.0L456.0 464.2L459.0 464.4L462.0 464.5L465.0 465.5L468.0 466.5L471.0 467.5L474.0 468.4L477.0 469.4L480.0 470.4L483.0 471.4L486.0 472.5L489.0 473.5L492.0 474.5L495.0 475.5L498.0 476.5L501.0 477.6L504.0 478.6L507.0 479.6L510.0 480.6L513.0 481.6L516.0 482.7L519.0 483.7L522.0 484.7L525.0 485.7L528.0 486.7L531.0 487.8L534.0 488.8L537.0 489.7L540.0 490.4L543.0 491.2L546.0 492.0L549.0 492.8L552.0 493.6L555.0 494.4L558.0 495.2L561.0 496.0L564.0 496.8L567.0 497.6L570.0 498.3L573.0 499.1L576.0 499.9L579.0 500.7L582.0 501.5L585.0 502.3L588.0 503.1L591.0 503.9L594.0 504.6L597.0 504.9L600.0 505.1L603.0 505.4L606.0 505.7L609.0 506.0L612.0 506.2L615.0 506.5L618.0 506.8L621.0 507.0L624.0 507.4L627.0 507.8L630.0 508.3L633.0 508.7L636.0 509.2L639.0 509.6M270.0 436.7L273.0 437.4L276.0 438.1L279.0 438.9L282.0 439.6L285.0 440.3L288.0 441.0L291.0 441.7L294.0 442.5L297.0 443.2L300.0 443.9L303.0 444.6L306.0 445.3L309.0 446.1L312.0 446.8L315.0 447.5L318.0 448.2L321.0 448.9L324.0 449.7L327.0 450.4L330.0 451.1L333.0 451.8L336.0 452.5L339.0 453.1L342.0 453.6L345.0 454.1L348.0 454.7L351.0 455.2L354.0 455.7L357.0 456.3L360.0 456.8L363.0 457.3L366.0 457.9L369.0 458.4L372.0 458.9L375.0 459.5L378.0 460.0L381.0 460.5L384.0 461.1L387.0 461.6L390.0 462.1L393.0 462.7L396.0 463.2L399.0 463.7L402.0 464.1L405.0 464.2L408.0 464.4L411.0 464.6L414.0 464.8L417.0 465.0L420.0 465.2L423.0 465.3L426.0 465.5L429.0 465.7L432.0 465.9L435.0 466.1L438.0 466.3L441.0 466.5L444.0 466.6L447.0 466.8L450.0 467.0L453.0 467.2L456.0 467.4L459.0 467.6L462.0 467.8L465.0 467.9L468.0 468.8L471.0 469.7L474.0 470.7L477.0 471.7L480.0 472.7L483.0 473.7L486.0 474.7L489.0 475.7L492.0 476.7L495.0 477.7L498.0 478.8L501.0 479.8L504.0 480.8L507.0 481.8L510.0 482.8L513.0 483.8L516.0 484.9L519.0 485.9L522.0 486.9L525.0 487.9L528.0 488.9L531.0 489.9L534.0 490.9L537.0 491.8L540.0 492.6L543.0 493.4L546.0 494.2L549.0 494.9L552.0 495.7L555.0 496.5L558.0 497.3L561.0 498.1L564.0 498.9L567.0 499.7L570.0 500.4L573.0 501.2L576.0 502.0L579.0 502.8L582.0 503.6L585.0 504.4L588.0 505.1L591.0 505.9L594.0 506.7L597.0 506.9L600.0 507.2L603.0 507.5L606.0 507.7L609.0 508.0L612.0 508.2L615.0 508.5L618.0 508.8L621.0 509.0L624.0 509.4L627.0 509.8L630.0 510.3L633.0 510.7L636.0 511.2L639.0 511.6M270.0 440.1L273.0 440.9L276.0 441.6L279.0 442.3L282.0 443.0L285.0 443.7L288.0 444.5L291.0 445.2L294.0 445.9L297.0 446.6L300.0 447.3L303.0 448.1L306.0 448.8L309.0 449.5L312.0 450.2L315.0 450.9L318.0 451.7L321.0 452.4L324.0 453.1L327.0 453.8L330.0 454.5L333.0 455.3L336.0 456.0L339.0 456.5L342.0 457.0L345.0 457.6L348.0 458.1L351.0 458.6L354.0 459.1L357.0 459.7L360.0 460.2L363.0 460.7L366.0 461.2L369.0 461.8L372.0 462.3L375.0 462.8L378.0 463.4L381.0 463.9L384.0 464.4L387.0 464.9L390.0 465.5L393.0 466.0L396.0 466.5L399.0 467.0L402.0 467.4L405.0 467.6L408.0 467.7L411.0 467.9L414.0 468.1L417.0 468.3L420.0 468.5L423.0 468.6L426.0 468.8L429.0 469.0L432.0 469.2L435.0 469.4L438.0 469.5L441.0 469.7L444.0 469.9L447.0 470.1L450.0 470.3L453.0 470.4L456.0 470.6L459.0 470.8L462.0 471.0L465.0 471.2L468.0 471.3L471.0 472.0L474.0 472.9L477.0 473.9L480.0 474.9L483.0 475.9L486.0 476.9L489.0 478.0L492.0 479.0L495.0 480.0L498.0 481.0L501.0 482.0L504.0 483.0L507.0 484.0L510.0 485.0L513.0 486.0L516.0 487.0L519.0 488.0L522.0 489.1L525.0 490.1L528.0 491.1L531.0 492.1L534.0 493.1L537.0 494.0L540.0 494.7L543.0 495.5L546.0 496.3L549.0 497.1L552.0 497.9L555.0 498.6L558.0 499.4L561.0 500.2L564.0 501.0L567.0 501.8L570.0 502.5L573.0 503.3L576.0 504.1L579.0 504.9L582.0 505.6L585.0 506.4L588.0 507.2L591.0 508.0L594.0 508.7L597.0 509.0L600.0 509.2L603.0 509.5L606.0 509.7L609.0 510.0L612.0 510.3L615.0 510.5L618.0 510.8L621.0 511.0L624.0 511.4L627.0 511.8L630.0 512.3L633.0 512.7L636.0 513.2L639.0 513.6M270.0 443.6L273.0 444.3L276.0 445.0L279.0 445.7L282.0 446.5L285.0 447.2L288.0 447.9L291.0 448.6L294.0 449.3L297.0 450.1L300.0 450.8L303.0 451.5L306.0 452.2L309.0 452.9L312.0 453.7L315.0 454.4L318.0 455.1L321.0 455.8L324.0 456.5L327.0 457.3L330.0 458.0L333.0 458.7L336.0 459.4L339.0 459.9L342.0 460.5L345.0 461.0L348.0 461.5L351.0 462.0L354.0 462.5L357.0 463.1L360.0 463.6L363.0 464.1L366.0 464.6L369.0 465.2L372.0 465.7L375.0 466.2L378.0 466.7L381.0 467.2L384.0 467.8L387.0 468.3L390.0 468.8L393.0 469.3L396.0 469.8L399.0 470.4L402.0 470.7L405.0 470.9L408.0 471.0L411.0 471.2L414.0 471.4L417.0 471.6L420.0 471.7L423.0 471.9L426.0 472.1L429.0 472.3L432.0 472.4L435.0 472.6L438.0 472.8L441.0 473.0L444.0 473.1L447.0 473.3L450.0 473.5L453.0 473.7L456.0 473.8L459.0 474.0L462.0 474.2L465.0 474.4L468.0 474.5L471.0 474.7L474.0 475.2L477.0 476.2L480.0 477.2L483.0 478.2L486.0 479.2L489.0 480.2L492.0 481.2L495.0 482.2L498.0 483.2L501.0 484.2L504.0 485.2L507.0 486.2L510.0 487.2L513.0 488.2L516.0 489.2L519.0 490.2L522.0 491.2L525.0 492.2L528.0 493.2L531.0 494.2L534.0 495.3L537.0 496.1L540.0 496.9L543.0 497.7L546.0 498.4L549.0 499.2L552.0 500.0L555.0 500.8L558.0 501.5L561.0 502.3L564.0 503.1L567.0 503.9L570.0 504.6L573.0 505.4L576.0 506.2L579.0 506.9L582.0 507.7L585.0 508.5L588.0 509.3L591.0 510.0L594.0 510.8L597.0 511.0L600.0 511.3L603.0 511.5L606.0 511.8L609.0 512.0L612.0 512.3L615.0 512.5L618.0 512.8L621.0 513.0L624.0 513.4L627.0 513.8L630.0 514.3L633.0 514.7L636.0 515.2L639.0 515.6M270.0 447.0L273.0 447.7L276.0 448.5L279.0 449.2L282.0 449.9L285.0 450.6L288.0 451.3L291.0 452.1L294.0 452.8L297.0 453.5L300.0 454.2L303.0 454.9L306.0 455.7L309.0 456.4L312.0 457.1L315.0 457.8L318.0 458.5L321.0 459.3L324.0 460.0L327.0 460.7L330.0 461.4L333.0 462.1L336.0 462.9L339.0 463.4L342.0 463.9L345.0 464.4L348.0 464.9L351.0 465.4L354.0 466.0L357.0 466.5L360.0 467.0L363.0 467.5L366.0 468.0L369.0 468.5L372.0 469.0L375.0 469.6L378.0 470.1L381.0 470.6L384.0 471.1L387.0 471.6L390.0 472.1L393.0 472.7L396.0 473.2L399.0 473.7L402.0 474.0L405.0 474.2L408.0 474.4L411.0 474.5L414.0 474.7L417.0 474.9L420.0 475.0L423.0 475.2L426.0 475.4L429.0 475.5L432.0 475.7L435.0 475.9L438.0 476.0L441.0 476.2L444.0 476.4L447.0 476.6L450.0 476.7L453.0 476.9L456.0 477.1L459.0 477.2L462.0 477.4L465.0 477.6L468.0 477.7L471.0 477.9L474.0 478.1L477.0 478.4L480.0 479.4L483.0 480.4L486.0 481.4L489.0 482.4L492.0 483.4L495.0 484.4L498.0 485.4L501.0 486.4L504.0 487.4L507.0 488.4L510.0 489.4L513.0 490.4L516.0 491.4L519.0 492.4L522.0 493.4L525.0 494.4L528.0 495.4L531.0 496.4L534.0 497.4L537.0 498.3L540.0 499.0L543.0 499.8L546.0 500.6L549.0 501.3L552.0 502.1L555.0 502.9L558.0 503.6L561.0 504.4L564.0 505.2L567.0 505.9L570.0 506.7L573.0 507.5L576.0 508.3L579.0 509.0L582.0 509.8L585.0 510.6L588.0 511.3L591.0 512.1L594.0 512.8L597.0 513.1L600.0 513.3L603.0 513.6L606.0 513.8L609.0 514.0L612.0 514.3L615.0 514.5L618.0 514.8L621.0 515.0L624.0 515.4L627.0 515.8L630.0 516.3L633.0 516.7L636.0 517.2L639.0 517.6" stroke="#1a1a1a" stroke-width="0.75" fill="none"/></g><polygon points="296,384.3 400,406.5 500,427.8 522.8,430.6 541,434.7 559.2,440.4 575.2,444.9 591.1,448.4 607.1,455.2 607.1,497.3 296,390.6" fill="#000"/><polygon points="607.1,455.2 618.5,446 634.4,437 645.8,423.3 652.7,413 659.5,405 792.3,297.2 792.3,345.4 607.1,497.3" fill="#000"/><path d="M296 384.3L336 326.5M480.5 186.4L792.3 297.2M480.5 186.4L393.7 259.7L372 280L352 300" stroke="#555" stroke-width="0.6" fill="none"/><path d="M473.5 193.2L498.1 193.7L531.5 206.4L557.9 216L566 219M470 198.5L501.6 201.1L528 213.4L549 216.9L551 216M557.9 216.0L570.2 217.3L591.3 217.8L619.4 233.6L625.5 239.8M556.8 217.6L568.9 219.4L588.6 220.4L615.9 235.9L624.7 241.5M555.8 219.2L567.7 221.5L586.0 223.1L612.4 238.2L623.8 243.3M554.7 220.8L566.5 223.6L583.4 225.7L608.8 240.5L622.9 245.0M553.7 222.4L565.3 225.7L580.7 228.3L605.3 242.7L622.0 246.8M552.6 223.9L564.0 227.8L578.1 231.0L601.8 245.0L621.1 248.5M551.5 225.5L562.8 229.9L575.4 233.6L598.3 247.3L620.3 250.3M631 242L640 250L647 260M638.8 245L647 260.7L672 263.8M647 247L676 255.5L697 263.8M620 236L630 241L628 251L620 253M720 272L737 282.6L720 290M700 270L712 268L735 278M752 303L760 305" stroke="#333" stroke-width="0.55" fill="none"/><polygon points="463.5,203.0 501.3,215.3 518.8,221.1 529.1,223.3 540.8,221.8 552.5,216.7 555.5,219.6 551.0,226.2 586.9,245.0 610.0,251.3 658.8,269.2 668.1,268.4 677.5,257.5 681.4,257.5 672.8,271.6 700.0,281.7 770.0,296.9 783.5,304.3 660.5,404.8 653.7,393.4 660.5,390.0 671.9,382.0 684.4,368.3 694.7,363.8 706.0,352.4 715.0,341.0 724.3,346.7 749.3,330.8 747.0,328.5 731.0,325.0 697.0,313.7 687.8,310.3 680.0,315.0 667.3,322.8 640.0,309.1 630.0,300.6 584.6,276.0 581.8,269.5 545.2,255.5 514.5,245.3 479.0,237.0 464.0,234.0 462.0,228.0 461.7,218.2 462.5,209.0" fill="#5f5f5a"/><polygon points="600.5,274.4 608.5,274.4 643.8,291.4 654.0,294.3 671.9,300.0 687.8,310.3 697.0,313.7 731.0,325.0 747.0,328.5 749.3,330.8 724.3,346.7 713.0,342.0 697.0,334.0 667.3,322.8 640.0,309.1 630.0,300.6 584.6,276.0" fill="#5f5f5a"/><polygon points="459.0,226.5 466.0,226.2 472.0,226.2 511.5,227.0 545.2,239.4 590.6,255.5 594.3,259.0 593.5,262.5 586.2,265.8 545.2,247.5 508.6,233.6 472.0,232.1 459.0,231.5" fill="#fff"/><polygon points="600.5,274.4 606.0,268.0 611.9,266.1 700.0,293.4 766.0,317.0 770.0,315.5 757.0,326.5 747.0,328.5 731.0,325.0 697.0,313.7 687.8,310.3 671.9,300.0 654.0,294.3 643.8,291.4 608.5,274.4" fill="#fff"/><path d="M763 313L777 311L771 318Z" fill="#fff"/><path d="M471 217C470 213 473 211.5 477 212.3L495.4 219.6C490 222.5 483 223.5 479 223.3C474 222.5 471.5 220 471 217Z" fill="#fff"/><circle cx="456" cy="230" r="5.2" fill="#5f5f5a"/><path d="M451 231L388 280.4L383.5 285L382.5 292L385 300L472 342L480 347L486 343L478 336L400.7 300.2L392 299L389.5 294L393 288.4L397.3 285.8L465 238L466 232Z" fill="#5f5f5a" stroke="#5f5f5a" stroke-width="0.8" stroke-linejoin="round"/><circle cx="457.4" cy="230.4" r="6.8" fill="#5f5f5a"/><polygon points="458,280 466,278.5 484,288.6 470,300 474,314 474.5,323 468,325.5 447,323.5 437,320 445,309 458,296" fill="#5f5f5a"/><path d="M494 294L446 320.5" stroke="#fff" stroke-width="1.6"/><path d="M438 316.5L446 316.5L448 321L440 321Z" fill="#fff" stroke="#888" stroke-width="0.4"/><path d="M455 324L470 323L471 328L458 329Z" fill="#fff" stroke="#888" stroke-width="0.4"/><path d="M444 297L474 321M446 320L474 321" stroke="#222" stroke-width="0.5"/><polygon points="474,331 512,344.6 502.9,355.3 487.7,353.7 475.5,341.6" fill="#5f5f5a"/><polygon points="586.4,340.9 601.7,342.6 589.8,348.5 586.4,353.7 577.8,360.5 559.9,368.2 552,376 541,400.6 564.2,384.4 590.6,392.1 570,372 600,345" fill="#5f5f5a"/><path d="M564 381L650 415L646 420L560 388Z" fill="#5f5f5a"/><path d="M613 380L618 380L634 404L650 414L640 417L626 405Z" fill="#5f5f5a"/><polygon points="600,352 612,350 620,356 612,366 598,372 590,366" fill="#5f5f5a"/><path d="M403 252L425 257L436 253L428 255.5L418 256M585.6 275.4L676 279L672 312L692 352" stroke="#222" stroke-width="0.6" fill="none"/><path d="M349.6 308.9L373.8 321.6L392.0 337.3L408.1 349.0L438.3 362.7L498.5 387.4L558.7 410.1L618.9 431.9M347.2 312.8L371.6 325.2L389.9 340.6L406.3 352.0L436.6 365.5L497.0 389.9L557.4 412.3L617.7 433.7M344.8 316.7L369.3 328.8L387.9 343.9L404.4 355.1L435.0 368.2L495.5 392.3L556.0 414.4L616.6 435.6M342.4 320.6L367.1 332.4L385.8 347.3L402.6 358.1L433.3 370.9L494.0 394.8L554.7 416.6L615.4 437.4M340.0 324.5L364.9 336.0L383.8 350.6L400.7 361.1L431.6 373.6L492.5 397.2L553.4 418.7L614.3 439.3M352 305L376 318L394 334L410 346L440 360L500 385L560 408L620 430" stroke="#2a2a2a" stroke-width="0.7" fill="none"/><path d="M362 330L392 348M368 336L398 352M375 342L430 368M372 316L384 334" stroke="#555" stroke-width="0.45" fill="none"/><path d="M351.5 300.9L379.7 284.2L381 289L353 305.5Z" fill="#c4beb0" stroke="#333" stroke-width="0.5"/><path d="M353 305.5L381 289L381 292L353 308Z" fill="#f4f4f4" stroke="#444" stroke-width="0.4"/><polygon points="379.0,287.0 373.0,297.0 374.0,311.0 381.0,322.0 396.0,330.0 457.0,351.0 474.0,361.0 499.0,368.0 552.0,376.0 552.0,380.0 498.0,372.0 472.0,365.0 455.0,355.0 394.0,334.0 378.0,325.0 370.0,311.0 369.0,297.0 376.0,286.0" fill="#c4beb0" stroke="#555" stroke-width="0.45"/><polygon points="376.0,314.0 390.0,330.0 409.0,341.0 465.0,362.0 480.0,370.0 478.0,374.0 463.0,367.0 406.0,346.0 388.0,334.0 374.0,318.0" fill="#c4beb0" stroke="#555" stroke-width="0.45"/><polygon points="398.0,334.0 440.0,356.0 476.0,376.0 506.0,392.0 531.0,408.0 547.0,415.0 546.0,419.0 530.0,412.0 505.0,397.0 474.0,380.0 438.0,361.0 396.0,338.0" fill="#c4beb0" stroke="#444" stroke-width="0.5"/><polygon points="461.8,369.8 473.6,361 502.9,374.2 491.1,383 473.6,378.6" fill="#c4beb0"/><polygon points="525,381.5 529.5,381.5 533.5,408 529,409.5" fill="#c4beb0" stroke="#555" stroke-width="0.45"/><polygon points="502.3,372.7 549.4,376.5 550.1,381.8 491.6,378.7" fill="#fff" stroke="#111" stroke-width="0.9"/><path d="M456 352L500 367" stroke="#fff" stroke-width="1.6"/><path d="M478 357L496 363M503 365L520 371" stroke="#222" stroke-width="0.6"/><polygon points="382,300 472,343 477,349 471,351 382,308" fill="#c4beb0" stroke="#333" stroke-width="0.5"/><path d="M384.0 305.2l3.4 1.6l0 2.6l-3.4 -1.6Z" fill="#fafafa" stroke="#333" stroke-width="0.35"/><path d="M388.6 307.4l3.4 1.6l0 2.6l-3.4 -1.6Z" fill="#fafafa" stroke="#333" stroke-width="0.35"/><path d="M393.1 309.6l3.4 1.6l0 2.6l-3.4 -1.6Z" fill="#fafafa" stroke="#333" stroke-width="0.35"/><path d="M397.6 311.7l3.4 1.6l0 2.6l-3.4 -1.6Z" fill="#fafafa" stroke="#333" stroke-width="0.35"/><path d="M402.2 313.9l3.4 1.6l0 2.6l-3.4 -1.6Z" fill="#fafafa" stroke="#333" stroke-width="0.35"/><path d="M406.8 316.1l3.4 1.6l0 2.6l-3.4 -1.6Z" fill="#fafafa" stroke="#333" stroke-width="0.35"/><path d="M411.3 318.3l3.4 1.6l0 2.6l-3.4 -1.6Z" fill="#fafafa" stroke="#333" stroke-width="0.35"/><path d="M415.9 320.5l3.4 1.6l0 2.6l-3.4 -1.6Z" fill="#fafafa" stroke="#333" stroke-width="0.35"/><path d="M420.4 322.6l3.4 1.6l0 2.6l-3.4 -1.6Z" fill="#fafafa" stroke="#333" stroke-width="0.35"/><path d="M424.9 324.8l3.4 1.6l0 2.6l-3.4 -1.6Z" fill="#fafafa" stroke="#333" stroke-width="0.35"/><path d="M429.5 327.0l3.4 1.6l0 2.6l-3.4 -1.6Z" fill="#fafafa" stroke="#333" stroke-width="0.35"/><path d="M434.1 329.2l3.4 1.6l0 2.6l-3.4 -1.6Z" fill="#fafafa" stroke="#333" stroke-width="0.35"/><path d="M438.6 331.4l3.4 1.6l0 2.6l-3.4 -1.6Z" fill="#fafafa" stroke="#333" stroke-width="0.35"/><path d="M443.1 333.5l3.4 1.6l0 2.6l-3.4 -1.6Z" fill="#fafafa" stroke="#333" stroke-width="0.35"/><path d="M447.7 335.7l3.4 1.6l0 2.6l-3.4 -1.6Z" fill="#fafafa" stroke="#333" stroke-width="0.35"/><path d="M452.2 337.9l3.4 1.6l0 2.6l-3.4 -1.6Z" fill="#fafafa" stroke="#333" stroke-width="0.35"/><path d="M456.8 340.1l3.4 1.6l0 2.6l-3.4 -1.6Z" fill="#fafafa" stroke="#333" stroke-width="0.35"/><path d="M461.4 342.3l3.4 1.6l0 2.6l-3.4 -1.6Z" fill="#fafafa" stroke="#333" stroke-width="0.35"/><path d="M465.9 344.4l3.4 1.6l0 2.6l-3.4 -1.6Z" fill="#fafafa" stroke="#333" stroke-width="0.35"/><path d="M382 303.5L472 346.5" stroke="#333" stroke-width="0.5"/><path d="M335.9 328.8L400.3 361L476.5 390.3L535.1 413.8L593.7 432.8L618 437" stroke="#444" stroke-width="5" fill="none"/><path d="M335.9 328.8L400.3 361L476.5 390.3L535.1 413.8L593.7 432.8L618 437" stroke="#a8a8a4" stroke-width="3.6" fill="none"/><path d="M335.9 328.8L400.3 361L476.5 390.3L535.1 413.8L593.7 432.8L618 437" stroke="#d8d8d4" stroke-width="1.2" fill="none"/><path d="M520 420L600 440L640 440M540 424L610 444M470 406L560 432L615 447M500 414L590 440" stroke="#222" stroke-width="0.5" fill="none"/><path d="M589.3 397.6L578.0 430.0M589.3 397.6L590.0 433.0M589.3 397.6L600.0 436.0M589.3 397.6L610.0 437.0M589.3 397.6L620.0 437.0M589.3 397.6L630.0 434.0M589.3 397.6L638.0 430.0M589.3 397.6L645.0 424.0M589.3 397.6L650.0 418.0" stroke="#444" stroke-width="0.5"/><polygon points="442.6,261.0 477.5,272.0 477.5,279.5 442.6,268.5" fill="#e3e6e2" stroke="#777" stroke-width="0.45"/><polygon points="477.5,272.0 518.9,243.6 518.9,251.1 477.5,279.5" fill="#e3e6e2" stroke="#777" stroke-width="0.45"/><polygon points="442.6,261.0 477.5,272.0 518.9,243.6 484.0,232.6" fill="#fff" stroke="#777" stroke-width="0.45"/><polygon points="475.3,246.8 486.2,241.4 498.2,246.8 487.3,253.4" fill="#fff" stroke="#777" stroke-width="0.45"/><polygon points="477.5,246.8 486.2,242.5 487,246 480,249.5" fill="#dde0dc"/><polygon points="463,253 469,250 486,257 480,260" fill="#dde0dc" stroke="#777" stroke-width="0.45"/><polygon points="477.5,272.0 502.6,282.8 502.6,294.8 477.5,284.0" fill="#e3e6e2" stroke="#777" stroke-width="0.45"/><polygon points="502.6,282.8 539.7,256.5 539.7,268.5 502.6,294.8" fill="#e3e6e2" stroke="#777" stroke-width="0.45"/><polygon points="477.5,272.0 502.6,282.8 539.7,256.5 514.6,245.7" fill="#fff" stroke="#777" stroke-width="0.45"/><polygon points="407.6,286.5 420.0,291.0 420.0,304.0 407.6,299.5" fill="#e3e6e2" stroke="#777" stroke-width="0.45"/><polygon points="420.0,291.0 445.1,274.2 445.1,287.2 420.0,304.0" fill="#e3e6e2" stroke="#777" stroke-width="0.45"/><polygon points="407.6,286.5 420.0,291.0 445.1,274.2 432.7,269.7" fill="#fff" stroke="#777" stroke-width="0.45"/><polygon points="433.9,279.3 449.9,285.3 449.9,297.9 433.9,291.9" fill="#e3e6e2" stroke="#777" stroke-width="0.45"/><polygon points="449.9,285.3 456.6,280.1 456.6,292.7 449.9,297.9" fill="#e3e6e2" stroke="#777" stroke-width="0.45"/><polygon points="433.9,279.3 449.9,285.3 456.6,280.1 440.6,274.1" fill="#fff" stroke="#777" stroke-width="0.45"/><polygon points="421.3,298.6 433.3,303.9 433.3,309.2 421.3,303.9" fill="#e3e6e2" stroke="#777" stroke-width="0.45"/><polygon points="433.3,303.9 441.3,297.2 441.3,302.5 433.3,309.2" fill="#e3e6e2" stroke="#777" stroke-width="0.45"/><polygon points="421.3,298.6 433.3,303.9 441.3,297.2 429.3,291.9" fill="#fff" stroke="#777" stroke-width="0.45"/><polygon points="513.0,269.7 548.4,281.7 548.4,293.7 513.0,281.7" fill="#e3e6e2" stroke="#777" stroke-width="0.45"/><polygon points="548.4,281.7 562.0,270.8 562.0,282.8 548.4,293.7" fill="#e3e6e2" stroke="#777" stroke-width="0.45"/><polygon points="513.0,269.7 548.4,281.7 562.0,270.8 526.6,258.8" fill="#fff" stroke="#777" stroke-width="0.45"/><polygon points="545.3,306.6 616.3,334.4 611,338.4 545.3,315.9" fill="#e3e6e2" stroke="#777" stroke-width="0.45"/><path d="M530 298.6L545.3 306.6M540 296L620 329" stroke="#777" stroke-width="0.45"/><polygon points="564.5,290.0 613.7,309.2 613.7,321.2 564.5,302.0" fill="#e3e6e2" stroke="#777" stroke-width="0.45"/><polygon points="613.7,309.2 629.6,298.6 629.6,310.6 613.7,321.2" fill="#e3e6e2" stroke="#777" stroke-width="0.45"/><polygon points="564.5,290.0 613.7,309.2 629.6,298.6 580.4,279.4" fill="#fff" stroke="#777" stroke-width="0.45"/><polygon points="549.5,272.0 563.7,279.6 563.7,299.6 549.5,292.0" fill="#e3e6e2" stroke="#777" stroke-width="0.45"/><polygon points="563.7,279.6 582.2,269.7 582.2,289.7 563.7,299.6" fill="#e3e6e2" stroke="#777" stroke-width="0.45"/><polygon points="549.5,272.0 563.7,279.6 582.2,269.7 568.0,262.1" fill="#fff" stroke="#777" stroke-width="0.45"/><polygon points="473.8,313.5 512.5,328.0 512.5,340.2 473.8,325.7" fill="#e3e6e2" stroke="#777" stroke-width="0.45"/><polygon points="512.5,328.0 541.3,306.8 541.3,319.0 512.5,340.2" fill="#e3e6e2" stroke="#777" stroke-width="0.45"/><polygon points="473.8,313.5 512.5,328.0 541.3,306.8 502.6,292.3" fill="#fff" stroke="#777" stroke-width="0.45"/><polygon points="512.5,342.4 549.7,359.1 549.7,367.1 512.5,350.4" fill="#e3e6e2" stroke="#777" stroke-width="0.45"/><polygon points="549.7,359.1 587.7,329.5 587.7,337.5 549.7,367.1" fill="#e3e6e2" stroke="#777" stroke-width="0.45"/><polygon points="512.5,342.4 549.7,359.1 587.7,329.5 550.5,312.8" fill="#fff" stroke="#777" stroke-width="0.45"/><polygon points="630.6,346.7 663.1,364.7 663.1,369.7 630.6,351.7" fill="#e3e6e2" stroke="#777" stroke-width="0.45"/><polygon points="663.1,364.7 691.3,340.0 691.3,345.0 663.1,369.7" fill="#e3e6e2" stroke="#777" stroke-width="0.45"/><polygon points="630.6,346.7 663.1,364.7 691.3,340.0 658.8,322.0" fill="#fff" stroke="#777" stroke-width="0.45"/><polygon points="641.7,341.6 664.0,351.0 664.0,356.0 641.7,346.6" fill="#e3e6e2" stroke="#777" stroke-width="0.45"/><polygon points="664.0,351.0 671.7,340.8 671.7,345.8 664.0,356.0" fill="#e3e6e2" stroke="#777" stroke-width="0.45"/><polygon points="641.7,341.6 664.0,351.0 671.7,340.8 649.4,331.4" fill="#fff" stroke="#777" stroke-width="0.45"/><polygon points="595.6,350.1 611.0,355.3 611.0,366.3 595.6,361.1" fill="#e3e6e2" stroke="#777" stroke-width="0.45"/><polygon points="611.0,355.3 640.1,335.7 640.1,346.7 611.0,366.3" fill="#e3e6e2" stroke="#777" stroke-width="0.45"/><polygon points="595.6,350.1 611.0,355.3 640.1,335.7 624.7,330.5" fill="#fff" stroke="#777" stroke-width="0.45"/><polygon points="611.9,361.2 631.5,368.9 631.5,375.9 611.9,368.2" fill="#e3e6e2" stroke="#777" stroke-width="0.45"/><polygon points="631.5,368.9 647.6,353.6 647.6,360.6 631.5,375.9" fill="#e3e6e2" stroke="#777" stroke-width="0.45"/><polygon points="611.9,361.2 631.5,368.9 647.6,353.6 628.0,345.9" fill="#fff" stroke="#777" stroke-width="0.45"/><polygon points="629.8,374.0 652.8,385.2 652.8,391.2 629.8,380.0" fill="#e3e6e2" stroke="#777" stroke-width="0.45"/><polygon points="652.8,385.2 671.6,373.3 671.6,379.3 652.8,391.2" fill="#e3e6e2" stroke="#777" stroke-width="0.45"/><polygon points="629.8,374.0 652.8,385.2 671.6,373.3 648.6,362.1" fill="#fff" stroke="#777" stroke-width="0.45"/><polygon points="590.5,369.0 611.0,380.0 611.0,384.0 590.5,373.0" fill="#e3e6e2" stroke="#777" stroke-width="0.45"/><polygon points="611.0,380.0 618.7,374.0 618.7,378.0 611.0,384.0" fill="#e3e6e2" stroke="#777" stroke-width="0.45"/><polygon points="590.5,369.0 611.0,380.0 618.7,374.0 598.2,363.0" fill="#fff" stroke="#777" stroke-width="0.45"/><polygon points="571.7,374.1 611.0,392.0 611.0,396.0 571.7,378.1" fill="#e3e6e2" stroke="#777" stroke-width="0.45"/><polygon points="611.0,392.0 619.5,386.0 619.5,390.0 611.0,396.0" fill="#e3e6e2" stroke="#777" stroke-width="0.45"/><polygon points="571.7,374.1 611.0,392.0 619.5,386.0 580.2,368.1" fill="#fff" stroke="#777" stroke-width="0.45"/><polygon points="541.1,400.6 565.0,409.2 565.0,417.2 541.1,408.6" fill="#e3e6e2" stroke="#777" stroke-width="0.45"/><polygon points="565.0,409.2 588.1,393.0 588.1,401.0 565.0,417.2" fill="#e3e6e2" stroke="#777" stroke-width="0.45"/><polygon points="541.1,400.6 565.0,409.2 588.1,393.0 564.2,384.4" fill="#5d5d59" stroke="#777" stroke-width="0.45"/><path d="M541 400.6L590 392M564 384.4L565 409" stroke="#333" stroke-width="0.5"/></g></svg><div style="left:876.5px;top:155px;width:24px;height:12.5px;background:#5a5a5a;border-radius:6.25px"></div><div style="left:879px;top:157.3px;width:8px;height:8px;border-radius:4px;background:#fff"></div><div class="t" style="left:903px;top:153.2px;font-size:7.6px;color:#262626;text-shadow:0 0 1px #aaa;letter-spacing:-0.1px"><b>Gráficos acelerados</b></div><div class="t" style="left:903px;top:161.5px;font-size:7.6px;color:#262626;text-shadow:0 0 1px #aaa;letter-spacing:0.05px"><b><i>Vista preliminar técnica</i></b></div><svg style="left:925px;top:166px;" width="80" height="60" viewBox="0 0 80 60"><defs><radialGradient id="sh" cx="0.5" cy="0.5" r="0.5"><stop offset="0" stop-color="#cfcfcf"/><stop offset="1" stop-color="#fff" stop-opacity="0"/></radialGradient></defs><ellipse cx="40.5" cy="37.5" rx="34.5" ry="19" fill="none" stroke="#d4d4d4" stroke-width="5.5"/><ellipse cx="40.5" cy="37.5" rx="34.5" ry="19" fill="none" stroke="#f6f6f6" stroke-width="3.8"/><ellipse cx="38" cy="40" rx="20" ry="10" fill="url(#sh)"/><path d="M26 5L37 4.5L52 5.5V40L37 40.5L26 39.5Z" fill="#e2e2e2" stroke="#c4c4c4" stroke-width="0.8"/><path d="M26 18L52 18.5M37 4.5V18" stroke="#c8c8c8" stroke-width="0.8"/><path d="M37 5L52 5.5V18.5L37 18Z" fill="#ececec"/><text x="27.5" y="32" font-size="4.5" fill="#9a9a9a" font-family="Liberation Sans">IZQUIERDA</text><path d="M45 7V16M46.5 7V16" stroke="#a8a8a8" stroke-width="0.7" stroke-dasharray="1.2 0.6"/><text x="6" y="34" font-size="4" fill="#aaa" font-family="Liberation Sans">N</text><text x="68" y="37" font-size="4" fill="#aaa" font-family="Liberation Sans">S</text><circle cx="37.5" cy="55.5" r="4" fill="#f8f8f8" stroke="#c8c8c8" stroke-width="1"/><circle cx="37.5" cy="55.5" r="1.8" fill="none" stroke="#c8c8c8" stroke-width="0.8"/></svg><div style="left:994.2px;top:231px;width:18.3px;height:62.5px;background:#f3f3f3;border:1px solid #d4d4d4;border-radius:3px"></div><svg style="left:994px;top:231px;" width="19" height="63" viewBox="0 0 19 63"><circle cx="15" cy="4.3" r="1.6" fill="none" stroke="#aaa" stroke-width="0.8"/><circle cx="15" cy="58" r="1.6" fill="none" stroke="#aaa" stroke-width="0.8"/><circle cx="8.5" cy="16.5" r="5.5" fill="none" stroke="#aaa" stroke-width="1"/><circle cx="8.5" cy="16.5" r="3" fill="none" stroke="#bbb" stroke-width="0.8"/><path d="M7 26H10L8.5 27.8Z" fill="#555"/><path d="M3 31H16" stroke="#ccc" stroke-width="0.8"/><rect x="5" y="35" width="6" height="6" fill="#9ccc7a"/><circle cx="12" cy="41.5" r="1.8" fill="none" stroke="#555" stroke-width="0.7"/><path d="M13.3 42.8L14.8 44.3" stroke="#555" stroke-width="0.8"/><path d="M7 49H10L8.5 50.8Z" fill="#555"/></svg><div style="left:213px;top:523.5px;width:7px;height:3.5px;background:#9aa0a8;opacity:0.85"></div><div style="left:238px;top:523.5px;width:7px;height:3.5px;background:#c8ccd0;opacity:0.85"></div><div style="left:255px;top:523.5px;width:7px;height:3.5px;background:#5aa8e8;opacity:0.85"></div><div style="left:271px;top:523.5px;width:7px;height:3.5px;background:#e8b030;opacity:0.85"></div><div style="left:286px;top:523.5px;width:7px;height:3.5px;background:#e8e8e8;opacity:0.85"></div><div style="left:303px;top:523.5px;width:7px;height:3.5px;background:#b8bcc0;opacity:0.85"></div><div style="left:321px;top:523.5px;width:7px;height:3.5px;background:#5aa8e8;opacity:0.85"></div><div style="left:338px;top:523.5px;width:7px;height:3.5px;background:#5aa8e8;opacity:0.85"></div><div style="left:352px;top:523.5px;width:7px;height:3.5px;background:#b8bcc0;opacity:0.85"></div><div style="left:369px;top:523.5px;width:7px;height:3.5px;background:#9aa0a8;opacity:0.85"></div><div style="left:385px;top:523.5px;width:7px;height:3.5px;background:#30b8c8;opacity:0.85"></div><div style="left:400px;top:523.5px;width:7px;height:3.5px;background:#c8ccd0;opacity:0.85"></div><div style="left:416px;top:523.5px;width:7px;height:3.5px;background:#b8bcc0;opacity:0.85"></div><div style="left:432px;top:523.5px;width:7px;height:3.5px;background:#5aa8e8;opacity:0.85"></div><div style="left:448px;top:523.5px;width:7px;height:3.5px;background:#c8ccd0;opacity:0.85"></div></body></html>
